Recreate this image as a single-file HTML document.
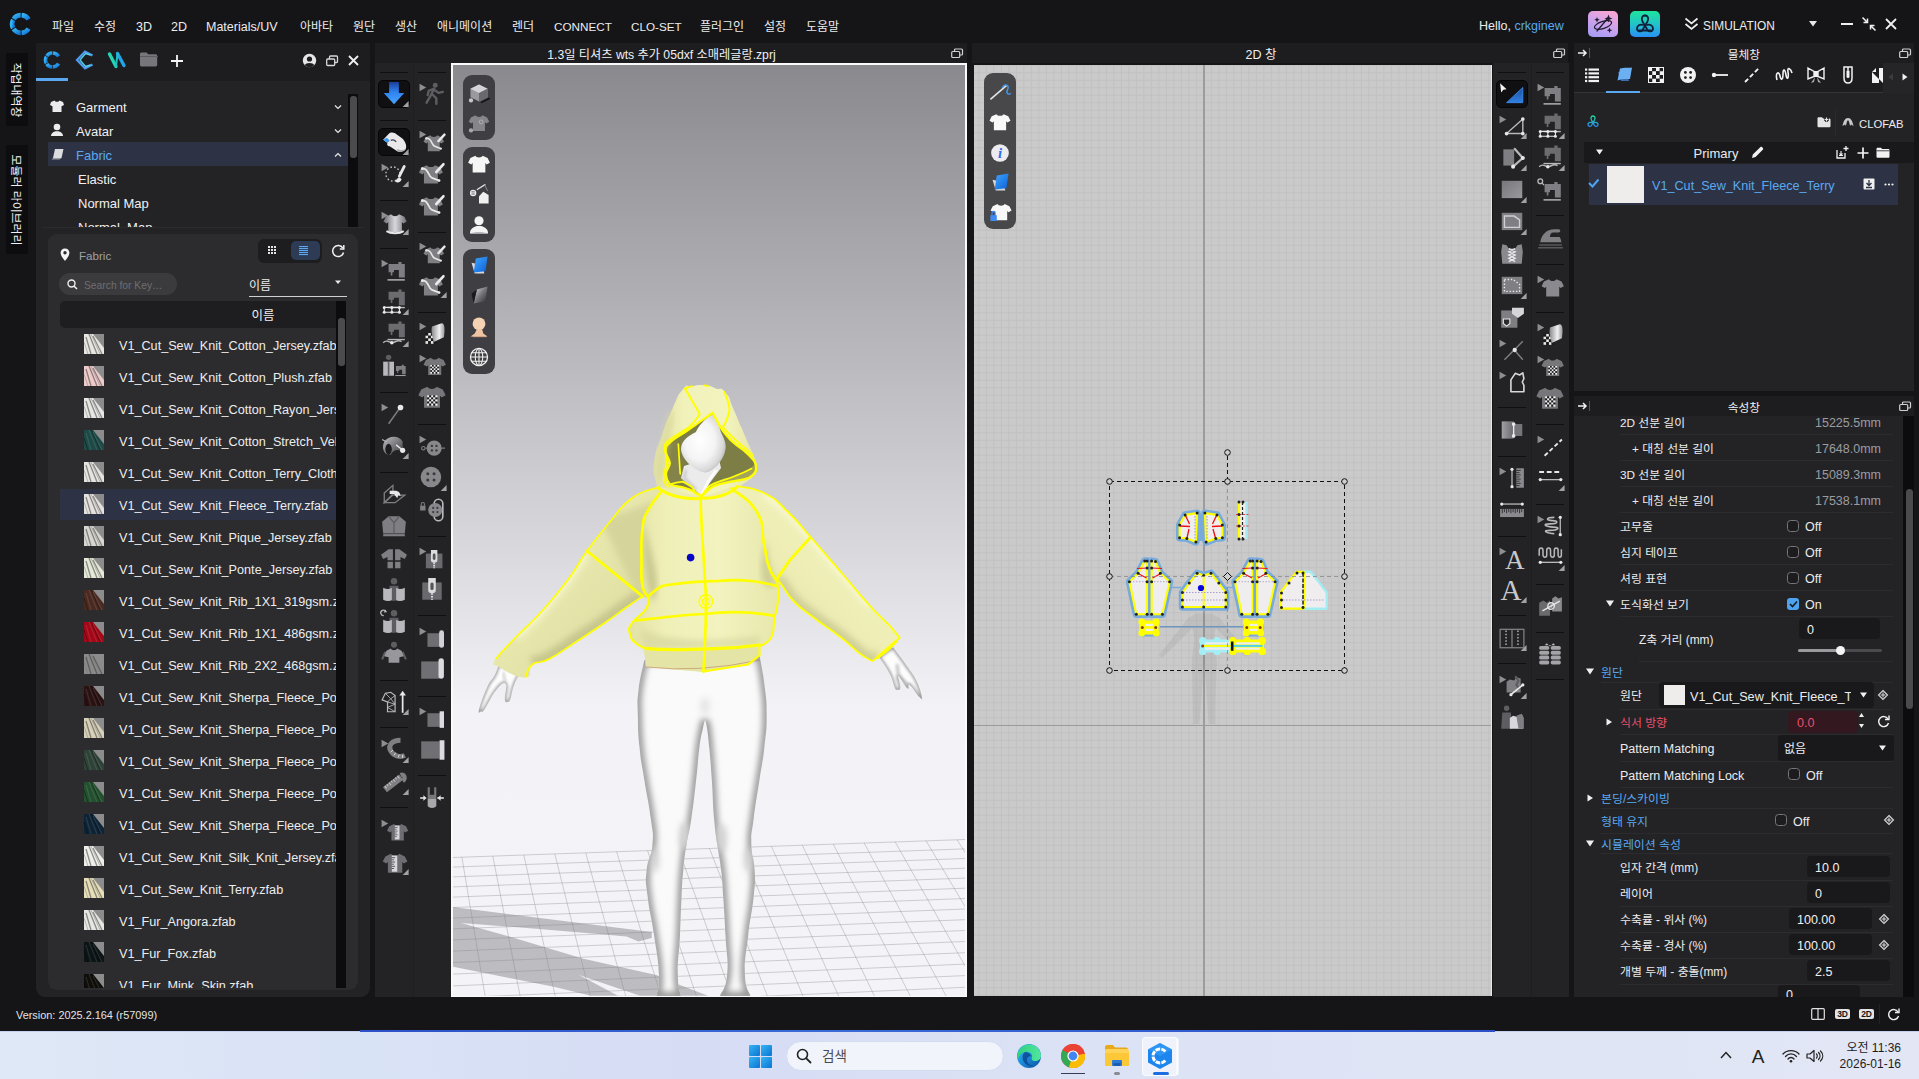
<!DOCTYPE html><html lang="ko"><head><meta charset="utf-8"><title>CLO</title><style>
*{box-sizing:border-box;margin:0;padding:0}
html,body{width:1919px;height:1079px;overflow:hidden;background:#151517}
body{position:relative;font-family:"Liberation Sans","Noto Sans CJK KR",sans-serif;font-size:12.5px;color:#e4e4e6;line-height:1}
.a{position:absolute}
.t{position:absolute;white-space:nowrap;line-height:20px;height:20px}
.k{font-size:12px}
.l{font-size:13px}
svg{position:absolute;overflow:visible}
.hl{position:absolute;height:1px;background:#111113}
</style></head><body><div class="a" style="left:0px;top:0px;width:1919px;height:43px;background:#151517;"></div><svg style="left:0px;top:0px;" width="44" height="44" viewBox="0 0 44 44"><defs><linearGradient id="lg0" x1="0" y1="0" x2="1" y2="1"><stop offset="0" stop-color="#35b4f2"/><stop offset="1" stop-color="#1577d8"/></linearGradient></defs><path d="M28.63,28.58A8.9,8.9 0 0 1 21.62,32.88" fill="none" stroke="url(#lg0)" stroke-width="4.6"/><path d="M20.69,32.89A8.9,8.9 0 0 1 13.62,28.98" fill="none" stroke="url(#lg0)" stroke-width="4.6"/><path d="M13.14,28.18A8.9,8.9 0 0 1 13.14,19.82" fill="none" stroke="url(#lg0)" stroke-width="4.6"/><path d="M13.62,19.02A8.9,8.9 0 0 1 20.69,15.11" fill="none" stroke="url(#lg0)" stroke-width="4.6"/><path d="M21.62,15.12A8.9,8.9 0 0 1 28.63,19.42" fill="none" stroke="url(#lg0)" stroke-width="4.6"/></svg><div class="t k" style="left:52px;top:17px;color:#ececee">파일</div><div class="t k" style="left:94px;top:17px;color:#ececee">수정</div><div class="t " style="left:136px;top:17px;color:#ececee">3D</div><div class="t " style="left:171px;top:17px;color:#ececee">2D</div><div class="t " style="left:206px;top:17px;color:#ececee">Materials/UV</div><div class="t k" style="left:300px;top:17px;color:#ececee">아바타</div><div class="t k" style="left:353px;top:17px;color:#ececee">원단</div><div class="t k" style="left:395px;top:17px;color:#ececee">생산</div><div class="t k" style="left:437px;top:17px;color:#ececee">애니메이션</div><div class="t k" style="left:512px;top:17px;color:#ececee">렌더</div><div class="t " style="left:554px;top:17px;color:#ececee;font-size:11.7px">CONNECT</div><div class="t " style="left:631px;top:17px;color:#ececee;font-size:11.7px">CLO-SET</div><div class="t k" style="left:700px;top:17px;color:#ececee">플러그인</div><div class="t k" style="left:764px;top:17px;color:#ececee">설정</div><div class="t k" style="left:806px;top:17px;color:#ececee">도움말</div><div class="t " style="left:1479px;top:16px;color:#ececee;font-size:12.5px">Hello, <span style="color:#5aa9f0">crkginew</span></div><div class="a" style="left:1588px;top:11px;width:30px;height:26px;background:linear-gradient(200deg,#f7a6d4 10%,#c9a2ee 55%,#9f9bf3 100%);border-radius:5px"></div><svg style="left:1588px;top:11px;" width="30" height="26" viewBox="0 0 30 26"><g fill="none" stroke="#1b1b2b" stroke-width="1.2" stroke-linecap="round"><path d="M9,20L20,7"/><ellipse cx="15" cy="14" rx="9" ry="3.5" transform="rotate(-18 15 14)"/></g><g fill="#1b1b2b"><path d="M20.5,3.5l1.1,2.9l2.9,1.1l-2.9,1.1l-1.1,2.9l-1.1,-2.9l-2.9,-1.1l2.9,-1.1z"/><path d="M9,6l.8,2l2,.8l-2,.8l-.8,2l-.8,-2l-2,-.8l2,-.8z"/><path d="M21.5,16.5l.8,2l2,.8l-2,.8l-.8,2l-.8,-2l-2,-.8l2,-.8z"/></g></svg><div class="a" style="left:1630px;top:11px;width:30px;height:26px;background:linear-gradient(180deg,#1fe39c 0%,#22c4c8 50%,#2a8ff5 100%);border-radius:5px"></div><svg style="left:1630px;top:11px;" width="30" height="26" viewBox="0 0 30 26"><g fill="none" stroke="#10203a" stroke-width="1.8" stroke-linecap="round" stroke-linejoin="round"><path d="M15,4.5c-3,0-4,3-2.5,6l5,8.5c1.5,2.5,5.5,1.500,5.500,-1.500c0,-3,-3,-4.500,-6,-3.500"/><path d="M15,4.5c3,0,4,3,2.500,6l-5,8.500c-1.500,2.500,-5.500,1.500,-5.500,-1.500c0,-3,3,-4.500,6,-3.500"/><path d="M9,19.500h12"/></g></svg><svg style="left:1684px;top:16px;" width="16" height="16" viewBox="0 0 16 16"><path d="M1.5,2.500l6,5l6,-5M1.500,8l6,5l6,-5" fill="none" stroke="#f0f0f0" stroke-width="1.700"/></svg><div class="t " style="left:1703px;top:16px;color:#ececee;font-size:11.9px">SIMULATION</div><svg style="left:1808px;top:20px;" width="10" height="8" viewBox="0 0 10 8"><path d="M1,1h8l-4,5.500z" fill="#e8e8e8"/></svg><div class="a" style="left:1841px;top:23px;width:12px;height:2px;background:#f0f0f0;"></div><svg style="left:1861px;top:16px;" width="16" height="16" viewBox="0 0 16 16"><g fill="none" stroke="#f0f0f0" stroke-width="1.500"><path d="M1.500,1.500l5,5M6.500,2.500v4h-4M14.500,14.500l-5,-5M9.500,13.500v-4h4"/></g></svg><svg style="left:1885px;top:18px;" width="12" height="12" viewBox="0 0 12 12"><path d="M1,1l10,10M11,1l-10,10" stroke="#f0f0f0" stroke-width="1.800" fill="none"/></svg>
<div class="a" style="left:6px;top:53px;width:22px;height:73px;background:#0d0d0f;"></div><div class="a" style="left:6px;top:145px;width:22px;height:109px;background:#0d0d0f;"></div><div class="t k" style="left:-84.5px;top:80px;width:200px;text-align:center;transform:rotate(90deg);color:#f2f2f2;font-size:11.9px">작업내역창</div><div class="t k" style="left:-84.5px;top:190px;width:200px;text-align:center;transform:rotate(90deg);color:#f2f2f2;font-size:11.9px">모듈러 라이브러리</div>
<div class="a" style="left:36px;top:43px;width:334px;height:954px;background:#232326;border-radius:0 0 9px 9px"></div><div class="a" style="left:36px;top:43px;width:334px;height:38px;background:#1d1d20;"></div><div class="a" style="left:36px;top:78px;width:32px;height:3px;background:#5aa9f0;"></div><svg style="left:36px;top:43px;" width="40" height="36" viewBox="0 0 40 36"><defs><linearGradient id="lg1" x1="0" y1="0" x2="1" y2="1"><stop offset="0" stop-color="#35b4f2"/><stop offset="1" stop-color="#1577d8"/></linearGradient></defs><path d="M22.60,20.61A7,7 0 0 1 17.09,23.98" fill="none" stroke="url(#lg1)" stroke-width="3.6"/><path d="M16.36,24.00A7,7 0 0 1 10.80,20.91" fill="none" stroke="url(#lg1)" stroke-width="3.6"/><path d="M10.42,20.29A7,7 0 0 1 10.42,13.71" fill="none" stroke="url(#lg1)" stroke-width="3.6"/><path d="M10.80,13.09A7,7 0 0 1 16.36,10.00" fill="none" stroke="url(#lg1)" stroke-width="3.6"/><path d="M17.09,10.02A7,7 0 0 1 22.60,13.39" fill="none" stroke="url(#lg1)" stroke-width="3.6"/></svg><svg style="left:75px;top:50px;" width="20" height="20" viewBox="0 0 20 20"><g fill="none" stroke-linejoin="miter"><path d="M17.500,5.500L10,1.500L2,10L10,18.500L17.500,14.500" stroke="#4e9cf0" stroke-width="2.200"/><path d="M15.500,5L10.500,3.500L5,10L10.500,16.500L15.500,15" stroke="#56d4e6" stroke-width="1.400"/></g></svg><svg style="left:106px;top:50px;" width="22" height="20" viewBox="0 0 22 20"><g fill="none" stroke-linecap="round" stroke-width="3.400"><path d="M3.500,4L10,16.500" stroke="#25d6b4"/><path d="M11.500,3.500L18,15.500" stroke="#1fa6e8"/><path d="M10,16.500L11.500,3.500" stroke="#20c0c8" stroke-width="2"/></g></svg><svg style="left:139px;top:51px;" width="20" height="17" viewBox="0 0 20 17"><path d="M1,3c0,-1,.6,-1.600,1.600,-1.600h5l1.600,1.800h7.400c1,0,1.600,.6,1.600,1.600v9c0,1,-.6,1.600,-1.600,1.600h-14c-1,0,-1.600,-.6,-1.600,-1.600z" fill="#77777b"/><path d="M1,5.500h18" stroke="#5c5c60" stroke-width="1"/></svg><svg style="left:170px;top:54px;" width="14" height="14" viewBox="0 0 14 14"><path d="M7,1v12M1,7h12" stroke="#f4f4f4" stroke-width="1.800"/></svg><svg style="left:302px;top:53px;" width="15" height="15" viewBox="0 0 15 15"><circle cx="7.500" cy="7.500" r="6.700" fill="#e6e6e6"/><circle cx="7.500" cy="6" r="2.600" fill="#1d1d20"/><path d="M2.800,12.200c1,-3,8.400,-3,9.400,0c-2.500,2.600,-6.900,2.600,-9.400,0z" fill="#1d1d20"/></svg><svg style="left:326px;top:55px;" width="12" height="12" viewBox="0 0 12 12"><g fill="none" stroke="#d8d8d8" stroke-width="1.300"><rect x="3.500" y="1" width="8" height="6.500" rx="1"/><rect x=".7" y="4" width="8" height="6.500" rx="1" fill="#1d1d20"/></g></svg><svg style="left:348px;top:55px;" width="11" height="11" viewBox="0 0 11 11"><path d="M1,1l9,9M10,1l-9,9" stroke="#f0f0f0" stroke-width="1.800"/></svg><div class="a" style="left:48px;top:142px;width:300px;height:24px;background:#2d3345;"></div><div class="t " style="left:76px;top:98px;color:#f0f0f0;font-size:13px">Garment</div><div class="t " style="left:76px;top:122px;color:#f0f0f0;font-size:13px">Avatar</div><div class="t " style="left:76px;top:146px;color:#5aa9f0;font-size:13px">Fabric</div><div class="t " style="left:78px;top:170px;color:#f0f0f0;font-size:13px">Elastic</div><div class="t " style="left:78px;top:194px;color:#f0f0f0;font-size:13px">Normal Map</div><div class="a" style="left:48px;top:214px;width:300px;height:13px;overflow:hidden"><div class="t" style="left:30px;top:4px;color:#f0f0f0;font-size:13px">Normal_Map</div></div><svg style="left:50px;top:100px;" width="14" height="13" viewBox="0 0 14 13"><path d="M4.500,0.500L1,2L0,5l2.500,1.200V12h9V6.200L14,5L13,2L9.500,0.500C9,2.300,5,2.300,4.500,0.500z" fill="#ececec"/></svg><svg style="left:50px;top:123px;" width="14" height="14" viewBox="0 0 14 14"><circle cx="7" cy="4" r="3.300" fill="#ececec"/><path d="M1,13c0,-3,3,-4.500,4.500,-4.800h3C10,8.500,13,10,13,13z" fill="#ececec"/></svg><svg style="left:51px;top:148px;" width="13" height="13" viewBox="0 0 13 13"><path d="M4,1h8.500l-2,9h-8.500z" fill="#dcdce0"/><path d="M2,10l-1.500,1.500h8l2,-1.500z" fill="#9a9aa4"/></svg><svg style="left:334px;top:103.5px;" width="8" height="6" viewBox="0 0 8 6"><path d="M1,1.500l3,3l3,-3" fill="none" stroke="#e8e8e8" stroke-width="1.200"/></svg><svg style="left:334px;top:127.5px;" width="8" height="6" viewBox="0 0 8 6"><path d="M1,1.500l3,3l3,-3" fill="none" stroke="#e8e8e8" stroke-width="1.200"/></svg><svg style="left:334px;top:151.5px;" width="8" height="6" viewBox="0 0 8 6"><path d="M1,4.500l3,-3l3,3" fill="none" stroke="#e8e8e8" stroke-width="1.200"/></svg><div class="a" style="left:348px;top:94px;width:10px;height:133px;background:#0c0c0e;"></div><div class="a" style="left:349.5px;top:96px;width:7px;height:62px;background:#4b4b4e;border-radius:3px"></div><div class="a" style="left:42px;top:227px;width:322px;height:1px;background:#2b2b2e;"></div><div class="a" style="left:48px;top:234px;width:310px;height:756px;background:#2c2c2f;border-radius:9px"></div><svg style="left:60px;top:248px;" width="10" height="14" viewBox="0 0 10 14"><path d="M5,0.500C2.300,0.500,.6,2.500,.6,4.800C.6,8,5,13,5,13S9.400,8,9.400,4.800C9.400,2.500,7.700,.5,5,.5z" fill="#f4f4f4"/><circle cx="5" cy="4.800" r="1.700" fill="#2c2c2f"/></svg><div class="t " style="left:79px;top:246px;color:#a0a0a4;font-size:11.6px">Fabric</div><div class="a" style="left:258px;top:239px;width:64px;height:24px;background:#1d1d20;border-radius:6px"></div><div class="a" style="left:291px;top:241px;width:29px;height:19px;background:#2d3b55;border-radius:5px"></div><svg style="left:268px;top:246px;" width="8" height="8" viewBox="0 0 8 8"><rect x="0" y="0" width="2" height="2" fill="#e4e4e4"/><rect x="0" y="3" width="2" height="2" fill="#e4e4e4"/><rect x="0" y="6" width="2" height="2" fill="#e4e4e4"/><rect x="3" y="0" width="2" height="2" fill="#e4e4e4"/><rect x="3" y="3" width="2" height="2" fill="#e4e4e4"/><rect x="3" y="6" width="2" height="2" fill="#e4e4e4"/><rect x="6" y="0" width="2" height="2" fill="#e4e4e4"/><rect x="6" y="3" width="2" height="2" fill="#e4e4e4"/><rect x="6" y="6" width="2" height="2" fill="#e4e4e4"/></svg><svg style="left:299px;top:246px;" width="9" height="9" viewBox="0 0 9 9"><rect x="0" y="0" width="9" height="1.100" fill="#5aa9f0"/><rect x="0" y="2" width="9" height="1.100" fill="#5aa9f0"/><rect x="0" y="4" width="9" height="1.100" fill="#5aa9f0"/><rect x="0" y="6" width="9" height="1.100" fill="#5aa9f0"/><rect x="0" y="8" width="9" height="1.100" fill="#5aa9f0"/></svg><svg style="left:331px;top:244px;" width="14" height="14" viewBox="0 0 14 14"><path d="M11.800,4A5.500,5.500 0 1 0 12.500,8.500" fill="none" stroke="#f0f0f0" stroke-width="1.500"/><path d="M12.800,1v4h-4" fill="none" stroke="#f0f0f0" stroke-width="1.500"/></svg><div class="a" style="left:59px;top:273px;width:118px;height:22px;background:#3b3b3e;border-radius:11px"></div><svg style="left:67px;top:279px;" width="11" height="11" viewBox="0 0 11 11"><circle cx="4.500" cy="4.500" r="3.500" fill="none" stroke="#f0f0f0" stroke-width="1.400"/><path d="M7,7l3,3" stroke="#f0f0f0" stroke-width="1.500"/></svg><div class="t " style="left:84px;top:276px;color:#6e6e72;font-size:10.3px">Search for Key…</div><div class="t k" style="left:249px;top:275.5px;color:#ececee">이름</div><svg style="left:335px;top:280px;" width="6" height="5" viewBox="0 0 6 5"><path d="M0,0.500h6l-3,3.500z" fill="#e8e8e8"/></svg><div class="a" style="left:249px;top:296px;width:98px;height:1px;background:#d0d0d0;"></div><div class="a" style="left:60px;top:301px;width:276px;height:27px;background:#1e1e21;border-radius:5px 0 0 5px"></div><div class="t k" style="left:113px;width:300px;text-align:center;top:306px;color:#f0f0f0;font-size:12.5px">이름</div><div class="a" style="left:336px;top:301px;width:10px;height:687px;background:#0c0c0e;"></div><div class="a" style="left:337.5px;top:318px;width:7px;height:48px;background:#4b4b4e;border-radius:3px"></div><div class="a" style="left:60px;top:489px;width:276px;height:31px;background:#2d3345;"></div><div class="a" style="left:60px;top:328px;width:276px;height:660px;overflow:hidden"><svg style="left:24px;top:6px;" width="20" height="20" viewBox="0 0 20 20"><rect width="20" height="20" fill="#8c8c8c"/><path d="M0,0H9L20,14V20H0Z" fill="#e8e6e0"/><path d="M5,0L13,20M9,2L18,20M2,3L7,20" stroke="rgba(60,60,60,.55)" stroke-width="1.300" fill="none"/><path d="M7,0L16,20M0,8L4,20" stroke="rgba(120,120,120,.45)" stroke-width="1" fill="none"/></svg><div class="t" style="left:59px;top:8px;color:#ececee;font-size:12.650px">V1_Cut_Sew_Knit_Cotton_Jersey.zfab</div><svg style="left:24px;top:38px;" width="20" height="20" viewBox="0 0 20 20"><rect width="20" height="20" fill="#8c8c8c"/><path d="M0,0H9L20,14V20H0Z" fill="#eecaca"/><path d="M5,0L13,20M9,2L18,20M2,3L7,20" stroke="rgba(60,60,60,.55)" stroke-width="1.300" fill="none"/><path d="M7,0L16,20M0,8L4,20" stroke="rgba(120,120,120,.45)" stroke-width="1" fill="none"/></svg><div class="t" style="left:59px;top:40px;color:#ececee;font-size:12.650px">V1_Cut_Sew_Knit_Cotton_Plush.zfab</div><svg style="left:24px;top:70px;" width="20" height="20" viewBox="0 0 20 20"><rect width="20" height="20" fill="#8c8c8c"/><path d="M0,0H9L20,14V20H0Z" fill="#e6e6e4"/><path d="M5,0L13,20M9,2L18,20M2,3L7,20" stroke="rgba(60,60,60,.55)" stroke-width="1.300" fill="none"/><path d="M7,0L16,20M0,8L4,20" stroke="rgba(120,120,120,.45)" stroke-width="1" fill="none"/></svg><div class="t" style="left:59px;top:72px;color:#ececee;font-size:12.650px">V1_Cut_Sew_Knit_Cotton_Rayon_Jersey.zfab</div><svg style="left:24px;top:102px;" width="20" height="20" viewBox="0 0 20 20"><rect width="20" height="20" fill="#8c8c8c"/><path d="M0,0H9L20,14V20H0Z" fill="#1d4a46"/><path d="M5,0L13,20M9,2L18,20M2,3L7,20" stroke="rgba(255,255,255,.10)" stroke-width="1.300" fill="none"/><path d="M7,0L16,20M0,8L4,20" stroke="rgba(0,0,0,.35)" stroke-width="1" fill="none"/></svg><div class="t" style="left:59px;top:104px;color:#ececee;font-size:12.650px">V1_Cut_Sew_Knit_Cotton_Stretch_Velour.zfab</div><svg style="left:24px;top:134px;" width="20" height="20" viewBox="0 0 20 20"><rect width="20" height="20" fill="#8c8c8c"/><path d="M0,0H9L20,14V20H0Z" fill="#e6e4e0"/><path d="M5,0L13,20M9,2L18,20M2,3L7,20" stroke="rgba(60,60,60,.55)" stroke-width="1.300" fill="none"/><path d="M7,0L16,20M0,8L4,20" stroke="rgba(120,120,120,.45)" stroke-width="1" fill="none"/></svg><div class="t" style="left:59px;top:136px;color:#ececee;font-size:12.650px">V1_Cut_Sew_Knit_Cotton_Terry_Cloth.zfab</div><svg style="left:24px;top:166px;" width="20" height="20" viewBox="0 0 20 20"><rect width="20" height="20" fill="#8c8c8c"/><path d="M0,0H9L20,14V20H0Z" fill="#e4e2de"/><path d="M5,0L13,20M9,2L18,20M2,3L7,20" stroke="rgba(60,60,60,.55)" stroke-width="1.300" fill="none"/><path d="M7,0L16,20M0,8L4,20" stroke="rgba(120,120,120,.45)" stroke-width="1" fill="none"/></svg><div class="t" style="left:59px;top:168px;color:#ececee;font-size:12.650px">V1_Cut_Sew_Knit_Fleece_Terry.zfab</div><svg style="left:24px;top:198px;" width="20" height="20" viewBox="0 0 20 20"><rect width="20" height="20" fill="#8c8c8c"/><path d="M0,0H9L20,14V20H0Z" fill="#d8d6d0"/><path d="M5,0L13,20M9,2L18,20M2,3L7,20" stroke="rgba(60,60,60,.55)" stroke-width="1.300" fill="none"/><path d="M7,0L16,20M0,8L4,20" stroke="rgba(120,120,120,.45)" stroke-width="1" fill="none"/></svg><div class="t" style="left:59px;top:200px;color:#ececee;font-size:12.650px">V1_Cut_Sew_Knit_Pique_Jersey.zfab</div><svg style="left:24px;top:230px;" width="20" height="20" viewBox="0 0 20 20"><rect width="20" height="20" fill="#8c8c8c"/><path d="M0,0H9L20,14V20H0Z" fill="#e4e8d6"/><path d="M5,0L13,20M9,2L18,20M2,3L7,20" stroke="rgba(60,60,60,.55)" stroke-width="1.300" fill="none"/><path d="M7,0L16,20M0,8L4,20" stroke="rgba(120,120,120,.45)" stroke-width="1" fill="none"/></svg><div class="t" style="left:59px;top:232px;color:#ececee;font-size:12.650px">V1_Cut_Sew_Knit_Ponte_Jersey.zfab</div><svg style="left:24px;top:262px;" width="20" height="20" viewBox="0 0 20 20"><rect width="20" height="20" fill="#8c8c8c"/><path d="M0,0H9L20,14V20H0Z" fill="#4a2a20"/><path d="M5,0L13,20M9,2L18,20M2,3L7,20" stroke="rgba(255,255,255,.10)" stroke-width="1.300" fill="none"/><path d="M7,0L16,20M0,8L4,20" stroke="rgba(0,0,0,.35)" stroke-width="1" fill="none"/></svg><div class="t" style="left:59px;top:264px;color:#ececee;font-size:12.650px">V1_Cut_Sew_Knit_Rib_1X1_319gsm.zfab</div><svg style="left:24px;top:294px;" width="20" height="20" viewBox="0 0 20 20"><rect width="20" height="20" fill="#8c8c8c"/><path d="M0,0H9L20,14V20H0Z" fill="#a40818"/><path d="M5,0L13,20M9,2L18,20M2,3L7,20" stroke="rgba(255,255,255,.10)" stroke-width="1.300" fill="none"/><path d="M7,0L16,20M0,8L4,20" stroke="rgba(0,0,0,.35)" stroke-width="1" fill="none"/></svg><div class="t" style="left:59px;top:296px;color:#ececee;font-size:12.650px">V1_Cut_Sew_Knit_Rib_1X1_486gsm.zfab</div><svg style="left:24px;top:326px;" width="20" height="20" viewBox="0 0 20 20"><rect width="20" height="20" fill="#8c8c8c"/><path d="M0,0H9L20,14V20H0Z" fill="#8a8a8a"/><path d="M5,0L13,20M9,2L18,20M2,3L7,20" stroke="rgba(60,60,60,.55)" stroke-width="1.300" fill="none"/><path d="M7,0L16,20M0,8L4,20" stroke="rgba(120,120,120,.45)" stroke-width="1" fill="none"/></svg><div class="t" style="left:59px;top:328px;color:#ececee;font-size:12.650px">V1_Cut_Sew_Knit_Rib_2X2_468gsm.zfab</div><svg style="left:24px;top:358px;" width="20" height="20" viewBox="0 0 20 20"><rect width="20" height="20" fill="#8c8c8c"/><path d="M0,0H9L20,14V20H0Z" fill="#2a1212"/><path d="M5,0L13,20M9,2L18,20M2,3L7,20" stroke="rgba(255,255,255,.10)" stroke-width="1.300" fill="none"/><path d="M7,0L16,20M0,8L4,20" stroke="rgba(0,0,0,.35)" stroke-width="1" fill="none"/></svg><div class="t" style="left:59px;top:360px;color:#ececee;font-size:12.650px">V1_Cut_Sew_Knit_Sherpa_Fleece_Polyester_A.zfab</div><svg style="left:24px;top:390px;" width="20" height="20" viewBox="0 0 20 20"><rect width="20" height="20" fill="#8c8c8c"/><path d="M0,0H9L20,14V20H0Z" fill="#d6d0b8"/><path d="M5,0L13,20M9,2L18,20M2,3L7,20" stroke="rgba(60,60,60,.55)" stroke-width="1.300" fill="none"/><path d="M7,0L16,20M0,8L4,20" stroke="rgba(120,120,120,.45)" stroke-width="1" fill="none"/></svg><div class="t" style="left:59px;top:392px;color:#ececee;font-size:12.650px">V1_Cut_Sew_Knit_Sherpa_Fleece_Polyester_B.zfab</div><svg style="left:24px;top:422px;" width="20" height="20" viewBox="0 0 20 20"><rect width="20" height="20" fill="#8c8c8c"/><path d="M0,0H9L20,14V20H0Z" fill="#2e4238"/><path d="M5,0L13,20M9,2L18,20M2,3L7,20" stroke="rgba(255,255,255,.10)" stroke-width="1.300" fill="none"/><path d="M7,0L16,20M0,8L4,20" stroke="rgba(0,0,0,.35)" stroke-width="1" fill="none"/></svg><div class="t" style="left:59px;top:424px;color:#ececee;font-size:12.650px">V1_Cut_Sew_Knit_Sherpa_Fleece_Polyester_C.zfab</div><svg style="left:24px;top:454px;" width="20" height="20" viewBox="0 0 20 20"><rect width="20" height="20" fill="#8c8c8c"/><path d="M0,0H9L20,14V20H0Z" fill="#23502e"/><path d="M5,0L13,20M9,2L18,20M2,3L7,20" stroke="rgba(255,255,255,.10)" stroke-width="1.300" fill="none"/><path d="M7,0L16,20M0,8L4,20" stroke="rgba(0,0,0,.35)" stroke-width="1" fill="none"/></svg><div class="t" style="left:59px;top:456px;color:#ececee;font-size:12.650px">V1_Cut_Sew_Knit_Sherpa_Fleece_Polyester_D.zfab</div><svg style="left:24px;top:486px;" width="20" height="20" viewBox="0 0 20 20"><rect width="20" height="20" fill="#8c8c8c"/><path d="M0,0H9L20,14V20H0Z" fill="#0e2436"/><path d="M5,0L13,20M9,2L18,20M2,3L7,20" stroke="rgba(255,255,255,.10)" stroke-width="1.300" fill="none"/><path d="M7,0L16,20M0,8L4,20" stroke="rgba(0,0,0,.35)" stroke-width="1" fill="none"/></svg><div class="t" style="left:59px;top:488px;color:#ececee;font-size:12.650px">V1_Cut_Sew_Knit_Sherpa_Fleece_Polyester_E.zfab</div><svg style="left:24px;top:518px;" width="20" height="20" viewBox="0 0 20 20"><rect width="20" height="20" fill="#8c8c8c"/><path d="M0,0H9L20,14V20H0Z" fill="#eeeeea"/><path d="M5,0L13,20M9,2L18,20M2,3L7,20" stroke="rgba(60,60,60,.55)" stroke-width="1.300" fill="none"/><path d="M7,0L16,20M0,8L4,20" stroke="rgba(120,120,120,.45)" stroke-width="1" fill="none"/></svg><div class="t" style="left:59px;top:520px;color:#ececee;font-size:12.650px">V1_Cut_Sew_Knit_Silk_Knit_Jersey.zfab</div><svg style="left:24px;top:550px;" width="20" height="20" viewBox="0 0 20 20"><rect width="20" height="20" fill="#8c8c8c"/><path d="M0,0H9L20,14V20H0Z" fill="#e6deb8"/><path d="M5,0L13,20M9,2L18,20M2,3L7,20" stroke="rgba(60,60,60,.55)" stroke-width="1.300" fill="none"/><path d="M7,0L16,20M0,8L4,20" stroke="rgba(120,120,120,.45)" stroke-width="1" fill="none"/></svg><div class="t" style="left:59px;top:552px;color:#ececee;font-size:12.650px">V1_Cut_Sew_Knit_Terry.zfab</div><svg style="left:24px;top:582px;" width="20" height="20" viewBox="0 0 20 20"><rect width="20" height="20" fill="#8c8c8c"/><path d="M0,0H9L20,14V20H0Z" fill="#e6e6e2"/><path d="M5,0L13,20M9,2L18,20M2,3L7,20" stroke="rgba(60,60,60,.55)" stroke-width="1.300" fill="none"/><path d="M7,0L16,20M0,8L4,20" stroke="rgba(120,120,120,.45)" stroke-width="1" fill="none"/></svg><div class="t" style="left:59px;top:584px;color:#ececee;font-size:12.650px">V1_Fur_Angora.zfab</div><svg style="left:24px;top:614px;" width="20" height="20" viewBox="0 0 20 20"><rect width="20" height="20" fill="#8c8c8c"/><path d="M0,0H9L20,14V20H0Z" fill="#0c1416"/><path d="M5,0L13,20M9,2L18,20M2,3L7,20" stroke="rgba(255,255,255,.10)" stroke-width="1.300" fill="none"/><path d="M7,0L16,20M0,8L4,20" stroke="rgba(0,0,0,.35)" stroke-width="1" fill="none"/></svg><div class="t" style="left:59px;top:616px;color:#ececee;font-size:12.650px">V1_Fur_Fox.zfab</div><svg style="left:24px;top:646px;" width="20" height="20" viewBox="0 0 20 20"><rect width="20" height="20" fill="#8c8c8c"/><path d="M0,0H9L20,14V20H0Z" fill="#100e0a"/><path d="M5,0L13,20M9,2L18,20M2,3L7,20" stroke="rgba(255,255,255,.10)" stroke-width="1.300" fill="none"/><path d="M7,0L16,20M0,8L4,20" stroke="rgba(0,0,0,.35)" stroke-width="1" fill="none"/></svg><div class="t" style="left:59px;top:648px;color:#ececee;font-size:12.650px">V1_Fur_Mink_Skin.zfab</div></div>
<div class="a" style="left:375px;top:43px;width:592px;height:20px;background:#1d1d20;"></div><div class="t " style="left:511.5px;width:300px;text-align:center;top:44.5px;color:#f0f0f0;font-size:12.2px">1.3일 티셔츠 wts 추가 05dxf 소매레글랑.zprj</div><svg style="left:951px;top:48px;" width="12" height="11" viewBox="0 0 12 11"><g fill="none" stroke="#d0d0d0" stroke-width="1.200"><rect x="3.500" y="1" width="8" height="6" rx="1"/><rect x=".7" y="3.500" width="8" height="6" rx="1" fill="#1d1d20"/></g></svg><div class="a" style="left:451px;top:63px;width:516px;height:934px;background:#fafafa;"></div><svg style="left:0;top:0" width="1919" height="1079" viewBox="0 0 1919 1079"><clipPath id="vp3d"><rect x="453" y="65" width="512" height="931"/></clipPath><g clip-path="url(#vp3d)"><defs>
<linearGradient id="bg3d" x1="0" y1="0" x2="0" y2="1"><stop offset="0" stop-color="#8a8a8e"/><stop offset=".69" stop-color="#f3f3f7"/><stop offset="1" stop-color="#f4f4f8"/></linearGradient>
<linearGradient id="legL" gradientUnits="userSpaceOnUse" x1="636" y1="0" x2="668" y2="0"><stop offset="0" stop-color="#c4c4c4"/><stop offset=".45" stop-color="#ededed"/><stop offset="1" stop-color="#fbfbfb"/></linearGradient><linearGradient id="legL2" gradientUnits="userSpaceOnUse" x1="668" y1="0" x2="704" y2="0"><stop offset="0" stop-color="#fbfbfb"/><stop offset=".5" stop-color="#eeeeee"/><stop offset="1" stop-color="#d2d2d2"/></linearGradient>
<linearGradient id="legR" gradientUnits="userSpaceOnUse" x1="705" y1="0" x2="737" y2="0"><stop offset="0" stop-color="#d2d2d2"/><stop offset=".5" stop-color="#f0f0f0"/><stop offset="1" stop-color="#fcfcfc"/></linearGradient><linearGradient id="legR2" gradientUnits="userSpaceOnUse" x1="737" y1="0" x2="767" y2="0"><stop offset="0" stop-color="#fcfcfc"/><stop offset=".55" stop-color="#ebebeb"/><stop offset="1" stop-color="#bcbcbc"/></linearGradient>
<linearGradient id="hoodG" x1="0" y1="0" x2="1" y2="0"><stop offset="0" stop-color="#dedea2"/><stop offset=".3" stop-color="#f1f1ba"/><stop offset=".7" stop-color="#f3f3be"/><stop offset="1" stop-color="#e4e4a8"/></linearGradient>
<linearGradient id="bodyG" x1="0" y1="0" x2="1" y2="0"><stop offset="0" stop-color="#e2e2a6"/><stop offset=".25" stop-color="#efefb8"/><stop offset=".6" stop-color="#f3f3c0"/><stop offset="1" stop-color="#e6e6ac"/></linearGradient>
<linearGradient id="slvL" x1="0" y1="0" x2="1" y2="1"><stop offset="0" stop-color="#f0f0ba"/><stop offset=".5" stop-color="#e6e6ac"/><stop offset="1" stop-color="#d8d89a"/></linearGradient>
<linearGradient id="slvR" x1="1" y1="0" x2="0" y2="1"><stop offset="0" stop-color="#f4f4c2"/><stop offset=".5" stop-color="#eeeeb6"/><stop offset="1" stop-color="#dedea4"/></linearGradient>
<radialGradient id="faceG" cx=".42" cy=".45" r=".62"><stop offset="0" stop-color="#ffffff"/><stop offset=".55" stop-color="#f4f4f4"/><stop offset=".85" stop-color="#d8d8d8"/><stop offset="1" stop-color="#b4b4b4"/></radialGradient>
</defs><rect x="453" y="65" width="512" height="931" fill="url(#bg3d)"/><g fill="#bdbdc1"><path d="M453,907L651.700,932L651.700,938L638.400,941.600L626.500,936.400L592.400,933.400L539,929L461,923L509.300,936.400L583.500,958.700L656.200,975L680,985L708,995.700H590.900L553.800,986.800L509.300,978L453,966.800Z"/></g><path d="M579,975L640,995.700L618,995.700Z" fill="#f3f3f7"/><path d="M276.2,863.7L276.2,996M307.1,862.6L310.9,996M338.1,861.5L345.6,996M369.0,860.5L380.3,996M400.0,859.4L415.2,996M430.9,858.3L450.1,996M461.9,857.2L485.1,996M492.8,856.1L520.1,996M523.8,855.0L555.2,996M554.8,853.9L590.4,996M585.7,852.8L625.7,996M616.6,851.7L661.0,996M647.6,850.7L696.4,996M678.5,849.6L731.8,996M709.5,848.5L767.4,996M740.5,847.4L803.0,996M771.4,846.3L838.6,996M802.3,845.2L874.4,996M833.3,844.1L910.2,996M864.2,843.0L946.1,996M895.2,841.9L982.0,996M926.1,840.8L1018.0,996M957.1,839.8L1054.1,996M453,857.5L965,839.5M453,867.1L965,848.9M453,876.9L965,858.5M453,886.9L965,868.2M453,897.1L965,878.1M453,907.5L965,888.2M453,918.1L965,898.5M453,928.9L965,909.0M453,939.9L965,919.7M453,951.1L965,930.5M453,962.5L965,941.5M453,974.1L965,952.7M453,985.9L965,964.1M453,997.9L965,975.6M453,1010.1L965,987.3M453,1022.5L965,999.2" stroke="#848488" stroke-opacity=".36" stroke-width="1" fill="none"/><clipPath id="legclip"><path d="M644.3,660.0C642.8,668.0 640.2,675.4 638.5,690.0C636.8,704.6 637.5,699.6 637.8,714.9C638.1,730.2 637.8,730.0 639.5,747.3C641.2,764.6 641.3,760.8 644.3,779.8C647.3,798.8 648.6,801.4 650.8,818.7C653.0,836.0 653.5,830.9 652.4,844.7C651.3,858.5 647.9,856.8 646.6,870.6C645.3,884.4 645.6,879.3 647.6,896.6C649.6,913.9 651.1,914.7 654.1,935.5C657.1,956.3 658.3,958.4 658.9,974.5C659.5,990.6 657.1,990.3 656.5,996.0L681.0,996.0C680.1,990.3 678.1,990.6 677.8,974.5C677.5,958.4 679.0,956.3 680.0,935.5C681.0,914.7 680.7,913.9 681.6,896.6C682.5,879.3 682.0,884.4 683.3,870.6C684.6,856.8 684.3,858.5 686.5,844.7C688.7,830.9 688.8,836.0 691.4,818.7C694.0,801.4 694.0,798.8 696.2,779.8C698.4,760.8 697.7,761.1 699.5,747.3C701.3,733.5 701.5,735.3 703.0,728.0C704.5,720.7 704.5,722.0 705.0,719.8L705.0,719.8C705.5,722.0 705.9,720.7 707.0,728.0C708.1,735.3 707.9,733.5 709.2,747.3C710.5,761.1 710.5,760.8 711.8,779.8C713.1,798.8 712.6,801.4 714.1,818.7C715.6,836.0 715.4,830.9 717.3,844.7C719.2,858.5 719.6,856.8 721.2,870.6C722.8,884.4 722.1,879.3 723.2,896.6C724.3,913.9 724.5,914.7 725.5,935.5C726.5,956.3 728.6,958.4 727.1,974.5C725.6,990.6 721.9,990.3 720.0,996.0L750.5,996.0C749.0,990.3 745.5,990.6 744.9,974.5C744.3,958.4 745.9,956.3 748.2,935.5C750.5,914.7 752.0,913.9 753.7,896.6C755.4,879.3 755.3,884.4 754.7,870.6C754.1,856.8 751.7,858.5 751.4,844.7C751.1,830.9 751.5,836.0 753.7,818.7C755.9,801.4 756.6,798.8 759.5,779.8C762.4,760.8 762.5,764.6 764.4,747.3C766.3,730.0 766.7,731.5 766.7,714.9C766.7,698.3 766.4,701.0 764.5,685.0C762.6,669.0 760.8,663.0 759.5,655.0Z"/></clipPath><filter id="bl3" x="-20%" y="-20%" width="140%" height="140%"><feGaussianBlur stdDeviation="3.2"/></filter><filter id="bl2" x="-20%" y="-20%" width="140%" height="140%"><feGaussianBlur stdDeviation="1.600"/></filter><g clip-path="url(#legclip)"><rect x="630" y="650" width="140" height="350" fill="#fafafa"/><path d="M644.3,660.0C642.8,668.0 640.2,675.4 638.5,690.0C636.8,704.6 637.5,699.6 637.8,714.9C638.1,730.2 637.8,730.0 639.5,747.3C641.2,764.6 641.3,760.8 644.3,779.8C647.3,798.8 648.6,801.4 650.8,818.7C653.0,836.0 653.5,830.9 652.4,844.7C651.3,858.5 647.9,856.8 646.6,870.6C645.3,884.4 645.6,879.3 647.6,896.6C649.6,913.9 651.1,914.7 654.1,935.5C657.1,956.3 658.3,958.4 658.9,974.5C659.5,990.6 657.1,990.3 656.5,996.0L681.0,996.0C680.1,990.3 678.1,990.6 677.8,974.5C677.5,958.4 679.0,956.3 680.0,935.5C681.0,914.7 680.7,913.9 681.6,896.6C682.5,879.3 682.0,884.4 683.3,870.6C684.6,856.8 684.3,858.5 686.5,844.7C688.7,830.9 688.8,836.0 691.4,818.7C694.0,801.4 694.0,798.8 696.2,779.8C698.4,760.8 697.7,761.1 699.5,747.3C701.3,733.5 701.5,735.3 703.0,728.0C704.5,720.7 704.5,722.0 705.0,719.8L705.0,719.8C705.5,722.0 705.9,720.7 707.0,728.0C708.1,735.3 707.9,733.5 709.2,747.3C710.5,761.1 710.5,760.8 711.8,779.8C713.1,798.8 712.6,801.4 714.1,818.7C715.6,836.0 715.4,830.9 717.3,844.7C719.2,858.5 719.6,856.8 721.2,870.6C722.8,884.4 722.1,879.3 723.2,896.6C724.3,913.9 724.5,914.7 725.5,935.5C726.5,956.3 728.6,958.4 727.1,974.5C725.6,990.6 721.9,990.3 720.0,996.0L750.5,996.0C749.0,990.3 745.5,990.6 744.9,974.5C744.3,958.4 745.9,956.3 748.2,935.5C750.5,914.7 752.0,913.9 753.7,896.6C755.4,879.3 755.3,884.4 754.7,870.6C754.1,856.8 751.7,858.5 751.4,844.7C751.1,830.9 751.5,836.0 753.7,818.7C755.9,801.4 756.6,798.8 759.5,779.8C762.4,760.8 762.5,764.6 764.4,747.3C766.3,730.0 766.7,731.5 766.7,714.9C766.7,698.3 766.4,701.0 764.5,685.0C762.6,669.0 760.8,663.0 759.5,655.0Z" fill="none" stroke="#969696" stroke-width="8" filter="url(#bl3)"/><g filter="url(#bl3)" fill="#d4d4d4"><ellipse cx="684" cy="836" rx="5" ry="14"/><ellipse cx="722" cy="838" rx="5" ry="14"/><ellipse cx="655" cy="860" rx="4" ry="12"/><ellipse cx="748" cy="860" rx="4" ry="12"/><ellipse cx="705" cy="706" rx="5" ry="9" fill="#e6e6e6"/></g></g><clipPath id="hlc"><path d="M499.0,664.0C497.9,666.7 497.3,670.1 494.5,675.6C491.7,681.1 490.6,679.4 487.0,687.4C483.4,695.4 480.3,704.1 478.9,709.7C477.5,715.3 479.7,711.7 481.1,711.5C482.5,711.3 481.3,713.8 484.8,708.9C488.3,704.0 491.0,696.3 495.9,690.4C500.8,684.5 503.5,681.6 505.6,683.7C507.7,685.8 504.4,695.1 504.8,699.3C505.2,703.5 505.8,701.9 507.1,701.9C508.4,701.9 508.9,703.0 510.4,699.3C511.9,695.6 511.5,692.1 513.7,686.0C515.9,679.9 518.5,676.0 520.0,673.0Z"/></clipPath><clipPath id="hrc"><path d="M879.0,657.0C881.5,660.9 886.0,666.5 889.7,673.7C893.4,680.9 893.1,684.1 894.8,687.8C896.5,691.5 895.8,689.7 897.1,689.7C898.4,689.7 900.1,691.0 900.4,687.8C900.7,684.6 896.9,675.8 898.5,676.0C900.1,676.2 904.8,686.5 907.4,688.6C910.0,690.7 906.9,682.9 909.7,684.9C912.5,686.9 916.5,694.3 919.3,697.1C922.1,699.9 922.6,700.6 921.9,696.7C921.2,692.8 920.0,687.8 916.3,680.4C912.6,673.0 911.4,672.6 906.0,664.8C900.6,657.0 896.0,651.2 893.0,647.0Z"/></clipPath><g clip-path="url(#hlc)"><rect x="470" y="655" width="60" height="65" fill="#fdfdfd"/><path d="M499.0,664.0C497.9,666.7 497.3,670.1 494.5,675.6C491.7,681.1 490.6,679.4 487.0,687.4C483.4,695.4 480.3,704.1 478.9,709.7C477.5,715.3 479.7,711.7 481.1,711.5C482.5,711.3 481.3,713.8 484.8,708.9C488.3,704.0 491.0,696.3 495.9,690.4C500.8,684.5 503.5,681.6 505.6,683.7C507.7,685.8 504.4,695.1 504.8,699.3C505.2,703.5 505.8,701.9 507.1,701.9C508.4,701.9 508.9,703.0 510.4,699.3C511.9,695.6 511.5,692.1 513.7,686.0C515.9,679.9 518.5,676.0 520.0,673.0Z" fill="none" stroke="#9a9a9a" stroke-width="3" filter="url(#bl2)"/><path d="M505.600,683.700L503,672" stroke="#c8c8c8" stroke-width="2" filter="url(#bl2)"/></g><g clip-path="url(#hrc)"><rect x="870" y="640" width="60" height="65" fill="#fdfdfd"/><path d="M879.0,657.0C881.5,660.9 886.0,666.5 889.7,673.7C893.4,680.9 893.1,684.1 894.8,687.8C896.5,691.5 895.8,689.7 897.1,689.7C898.4,689.7 900.1,691.0 900.4,687.8C900.7,684.6 896.9,675.8 898.5,676.0C900.1,676.2 904.8,686.5 907.4,688.6C910.0,690.7 906.9,682.9 909.7,684.9C912.5,686.9 916.5,694.3 919.3,697.1C922.1,699.9 922.6,700.6 921.9,696.7C921.2,692.8 920.0,687.8 916.3,680.4C912.6,673.0 911.4,672.6 906.0,664.8C900.6,657.0 896.0,651.2 893.0,647.0Z" fill="none" stroke="#9a9a9a" stroke-width="3" filter="url(#bl2)"/><path d="M898.500,676L897,664M899,677L909,686" stroke="#b8b8b8" stroke-width="2.500" filter="url(#bl2)"/></g><path d="M654.500,465L656,481L659.500,487.500C668,498 690,501 702,499C716,500 730,495 738,487.500L752,478L757,466L700,440Z" fill="#ececb2"/><path d="M712.700,412.800C708,416 704,419 699.700,421.900C694,426 688,430 682.800,433.600C677,437 671,441 667.200,445.300C665,448 665.500,451 666,453C667,457 670,460 669.800,463.400C669.500,467 666,470 666,473.800C666,478 668,482 669.800,484.200C674,486 678,486.500 682.800,487.400C686,488 689,489.500 691.900,490.700C695,492 698,494 701.500,496.500C705,493 708,489.500 712.700,486.800C718,484 724,482.800 730.800,481.600C737,480.500 744,480 749,477.700C753,475.500 756,472 756.100,468.600C756.200,465.500 755.500,463 754.200,460.800C751,457 748,454 743.800,450.400C739,447 735,444 730.800,440.100C727,436 723.500,432 720.400,427.100C717.500,422 715,417 712.700,412.800Z" fill="#7d7d46"/><path d="M702,496L712.700,486.800C722,482 740,482 749,477.700C754,475 756.500,470 755,463C752,470 742,474 730,477C720,479.500 712,483 707,489Z" fill="#a3a35c"/><path d="M667,446L678.300,440L680.200,473.800L684,482L670,484C666,478 669.500,468 669.800,463.400C670,458 664,452 667,446Z" fill="#84844a"/><path d="M684,466L681,478L701.500,496L709,484L721,468L718,455Z" fill="#ebebeb"/><path d="M701.500,496L708,482L716,470" fill="none" stroke="#ffffff" stroke-width="3" opacity=".8"/><path d="M686,470L684,478L696,490" fill="none" stroke="#c4c4c4" stroke-width="2.500" filter="url(#bl2)"/><path d="M712.700,414.500C706,417 697,428 696,432C688,436 681,441 681,449C681.500,459 694,471 705,472.500C714,472 726,458 725.700,446C725.500,440 722,435 720.500,431C719,424 716,418 712.700,414.500Z" fill="url(#faceG)"/><path d="M659.5,486.8C658.2,484.6 657.3,489.0 655.6,480.3C653.9,471.6 652.1,475.9 654.3,460.8C656.5,445.7 656.1,452.2 662.1,434.9C668.1,417.6 665.5,424.0 672.4,408.9C679.3,393.8 676.3,397.1 682.8,389.5C689.3,381.9 684.5,387.6 691.9,386.2C699.3,384.8 697.1,384.6 704.9,385.3C712.7,386.0 708.4,385.7 715.3,388.2C722.2,390.7 719.6,385.8 725.6,392.7C731.6,399.6 728.2,397.4 733.4,408.9C738.6,420.4 736.0,415.0 741.2,427.1C746.4,439.2 744.5,434.9 749.0,445.3C753.5,455.7 752.2,450.4 754.8,458.2C757.4,466.0 757.9,462.1 756.8,468.6C755.7,475.1 757.7,472.5 751.6,477.7C745.5,482.9 742.9,482.0 738.6,484.2L702.500,497L659.500,486.800Z M712.700,412.800C708,416 704,419 699.700,421.900C694,426 688,430 682.800,433.600C677,437 671,441 667.200,445.300C665,448 665.500,451 666,453C667,457 670,460 669.800,463.400C669.500,467 666,470 666,473.800C666,478 668,482 669.800,484.200C674,486 678,486.500 682.800,487.400C686,488 689,489.500 691.900,490.700C695,492 698,494 701.500,496.500C705,493 708,489.500 712.700,486.800C718,484 724,482.800 730.800,481.600C737,480.500 744,480 749,477.700C753,475.500 756,472 756.100,468.600C756.200,465.500 755.500,463 754.200,460.800C751,457 748,454 743.800,450.400C739,447 735,444 730.800,440.100C727,436 723.500,432 720.400,427.100C717.500,422 715,417 712.700,412.800Z" fill="url(#hoodG)" fill-rule="evenodd"/><path d="M672,412C668,430 662,450 660,478" fill="none" stroke="#d6d69c" stroke-width="5" filter="url(#bl3)" opacity=".8"/><path d="M657.7,487.4C650.8,490.2 645.0,488.5 632.0,498.0C619.0,507.5 621.0,508.9 609.0,523.0C597.0,537.1 598.2,535.5 587.0,551.0C575.8,566.5 579.7,564.3 567.0,581.0C554.3,597.7 553.1,598.8 539.5,613.7C525.9,628.6 527.7,624.9 516.0,637.0C504.3,649.1 499.8,650.9 495.5,659.0C491.2,667.1 492.0,662.6 500.0,667.5C508.0,672.4 516.8,678.3 525.5,677.5C534.2,676.7 526.2,669.4 532.5,664.5C538.8,659.6 537.3,665.1 549.0,659.0C560.7,652.9 561.7,651.1 576.5,641.5C591.3,631.9 590.9,632.3 604.5,623.0C618.1,613.7 617.2,613.7 627.5,606.5C637.8,599.3 638.9,598.8 643.0,596.0L650,600L664,500Z" fill="url(#slvL)"/><clipPath id="slcL"><path d="M657.7,487.4C650.8,490.2 645.0,488.5 632.0,498.0C619.0,507.5 621.0,508.9 609.0,523.0C597.0,537.1 598.2,535.5 587.0,551.0C575.8,566.5 579.7,564.3 567.0,581.0C554.3,597.7 553.1,598.8 539.5,613.7C525.9,628.6 527.7,624.9 516.0,637.0C504.3,649.1 499.8,650.9 495.5,659.0C491.2,667.1 492.0,662.6 500.0,667.5C508.0,672.4 516.8,678.3 525.5,677.5C534.2,676.7 526.2,669.4 532.5,664.5C538.8,659.6 537.3,665.1 549.0,659.0C560.7,652.9 561.7,651.1 576.5,641.5C591.3,631.9 590.9,632.3 604.5,623.0C618.1,613.7 617.2,613.7 627.5,606.5C637.8,599.3 638.9,598.8 643.0,596.0L650,600L664,500Z"/></clipPath><g clip-path="url(#slcL)"><path d="M532.5,664.5C536.9,663.0 537.3,665.1 549.0,659.0C560.7,652.9 561.7,651.1 576.5,641.5C591.3,631.9 590.9,632.3 604.5,623.0C618.1,613.7 617.2,613.7 627.5,606.5C637.8,599.3 638.9,598.8 643.0,596.0" fill="none" stroke="#c6c68e" stroke-width="16" filter="url(#bl3)"/><path d="M600,520L640,600L655,560L660,500Z" fill="#d0d098" filter="url(#bl3)" opacity=".8"/><path d="M587,551L567,581L539.500,613.700L516,637" fill="none" stroke="#f6f6cc" stroke-width="8" filter="url(#bl3)"/></g><path d="M736.0,486.0C743.5,487.9 750.3,486.2 764.0,493.0C777.7,499.8 775.1,499.8 787.5,511.5C799.9,523.2 795.7,520.2 810.5,537.0C825.3,553.8 827.0,556.0 843.0,574.5C859.0,593.0 856.6,591.2 870.5,606.5C884.4,621.8 888.2,622.7 895.0,632.0C901.8,641.3 900.7,634.7 896.0,641.5C891.3,648.3 885.5,653.2 877.5,657.5C869.5,661.8 875.9,663.0 866.0,657.5C856.1,652.0 854.1,647.4 840.5,637.0C826.9,626.6 827.3,627.8 815.0,618.5C802.7,609.2 803.2,610.7 794.5,602.0C785.8,593.3 787.2,592.1 782.5,586.0C777.8,579.9 778.5,580.9 777.0,579.0L770,585L730,495Z" fill="url(#slvR)"/><clipPath id="slcR"><path d="M736.0,486.0C743.5,487.9 750.3,486.2 764.0,493.0C777.7,499.8 775.1,499.8 787.5,511.5C799.9,523.2 795.7,520.2 810.5,537.0C825.3,553.8 827.0,556.0 843.0,574.5C859.0,593.0 856.6,591.2 870.5,606.5C884.4,621.8 888.2,622.7 895.0,632.0C901.8,641.3 900.7,634.7 896.0,641.5C891.3,648.3 885.5,653.2 877.5,657.5C869.5,661.8 875.9,663.0 866.0,657.5C856.1,652.0 854.1,647.4 840.5,637.0C826.9,626.6 827.3,627.8 815.0,618.5C802.7,609.2 803.2,610.7 794.5,602.0C785.8,593.3 787.2,592.1 782.5,586.0C777.8,579.9 778.5,580.9 777.0,579.0L770,585L730,495Z"/></clipPath><g clip-path="url(#slcR)"><path d="M877.5,657.5C874.4,657.5 875.9,663.0 866.0,657.5C856.1,652.0 854.1,647.4 840.5,637.0C826.9,626.6 827.3,627.8 815.0,618.5C802.7,609.2 803.2,610.7 794.5,602.0C785.8,593.3 787.2,592.1 782.5,586.0C777.8,579.9 778.5,580.9 777.0,579.0" fill="none" stroke="#d0d098" stroke-width="14" filter="url(#bl3)"/><path d="M764,493L787.500,511.500L810.500,537L843,574.500L870.500,606.500" fill="none" stroke="#f7f7d0" stroke-width="8" filter="url(#bl3)"/></g><path d="M657.7,487.4C658.5,488.5 663.1,486.8 661.0,492.0C658.9,497.2 652.8,501.1 648.5,509.5C644.2,517.9 644.1,515.5 642.5,528.0C640.9,540.5 641.5,549.5 641.5,563.0C641.5,576.5 640.9,578.0 642.5,586.0C644.1,594.0 647.7,592.1 648.5,597.5C649.3,602.9 649.9,603.0 646.0,609.0C642.1,615.0 635.7,617.0 632.0,623.0C628.3,629.0 628.8,629.6 630.0,634.5C631.2,639.4 633.7,640.4 637.0,644.0C640.3,647.6 641.9,644.6 644.0,650.0C646.1,655.4 645.5,663.0 646.0,667.0L704,672L748.0,664.5C750.7,662.4 756.7,659.8 759.5,655.5C762.3,651.2 758.4,649.0 760.0,646.0C761.6,643.0 763.6,645.2 766.5,642.5C769.4,639.8 770.6,640.1 772.5,634.5C774.4,628.9 773.2,626.5 774.5,618.5C775.8,610.5 777.4,609.2 778.0,600.0C778.6,590.8 779.1,586.7 777.0,579.0C774.9,571.3 772.0,575.2 769.0,567.0C766.0,558.8 766.8,556.8 764.0,544.0C761.2,531.2 763.3,525.3 757.0,512.0C750.7,498.7 741.7,492.8 737.0,487.0C730,494 716,499 702,498C690,500 668,497 657.700,487.400Z" fill="url(#bodyG)"/><path d="M643,520C652,555 664,590 652,602C646,585 642,560 643,520Z" fill="#c8c890" filter="url(#bl3)"/><path d="M766,540C758,570 760,595 777,584C770,570 768,560 766,540Z" fill="#cccc94" filter="url(#bl3)"/><path d="M640,628C660,640 700,644 760,636L760,646L644,650Z" fill="#d8d8a0" filter="url(#bl3)" opacity=".8"/><path d="M644,651C680,648 730,649 760,646L759.500,655.500L748,664.500L704,672L646,667Z" fill="#e4e4a6"/><path d="M646,667Q700,673 760,660" fill="none" stroke="#b06a50" stroke-width=".8" opacity=".6"/><path d="M712.700,412.800C708,416 704,419 699.700,421.900C694,426 688,430 682.800,433.600C677,437 671,441 667.200,445.300C665,448 665.500,451 666,453C667,457 670,460 669.800,463.400C669.500,467 666,470 666,473.800C666,478 668,482 669.800,484.200C674,486 678,486.500 682.800,487.400C686,488 689,489.500 691.900,490.700C695,492 698,494 701.500,496.500C705,493 708,489.500 712.700,486.800C718,484 724,482.800 730.800,481.600C737,480.500 744,480 749,477.700C753,475.500 756,472 756.100,468.600C756.200,465.500 755.500,463 754.200,460.800C751,457 748,454 743.800,450.400C739,447 735,444 730.800,440.100C727,436 723.500,432 720.400,427.100C717.500,422 715,417 712.700,412.800Z" stroke="#ffff00" fill="none" stroke-linejoin="round" stroke-linecap="round" stroke-width="2.3"/><path d="M684,389C686,388 689,387 692,386.200M704,385.300C706,385.300 707,385.500 708,386" stroke="#ffff00" fill="none" stroke-linejoin="round" stroke-linecap="round" stroke-width="1.8"/><path d="M685,388.500C690,397 695,406 699.700,414.100C697,419 693,423 689.300,427.100C682,432 672,437 666,442.700C664.500,445 664.300,448 664.700,450.400" stroke="#ffff00" fill="none" stroke-linejoin="round" stroke-linecap="round" stroke-width="1.9"/><path d="M724.300,392.100C727,398 729,404 729.500,408.900C729,416 726,422 723,427.100C728,433 733,438 738.600,442.700C744,447 749,451 752.900,455.600" stroke="#ffff00" fill="none" stroke-linejoin="round" stroke-linecap="round" stroke-width="1.9"/><path d="M678.300,444L680.200,473.800" stroke="#ffff00" fill="none" stroke-linejoin="round" stroke-linecap="round" stroke-width="1.7"/><path d="M669.800,484.200C674,483 679,482 682.800,481.600C686,483 689,485 691.900,486.800C693.500,489 695,492 695.800,494.600" stroke="#ffff00" fill="none" stroke-linejoin="round" stroke-linecap="round" stroke-width="1.7"/><path d="M702.300,494.600C705,491 707,488 710.100,485.500C716,482 724,480 730.800,477.700C738,475 746,472 751.600,468.600" stroke="#ffff00" fill="none" stroke-linejoin="round" stroke-linecap="round" stroke-width="1.7"/><path d="M664.700,450.400C666,456 667,460 666.500,464C665,470 663,476 664,481C665,484 667,486 669.800,487" stroke="#ffff00" fill="none" stroke-linejoin="round" stroke-linecap="round" stroke-width="1.6"/><path d="M657.700,487.400C668,497 690,500 702,498C716,499 730,494 737,487" stroke="#ffff00" fill="none" stroke-linejoin="round" stroke-linecap="round" stroke-width="3"/><path d="M657.7,487.4C650.8,490.2 645.0,488.5 632.0,498.0C619.0,507.5 621.0,508.9 609.0,523.0C597.0,537.1 598.2,535.5 587.0,551.0C575.8,566.5 579.7,564.3 567.0,581.0C554.3,597.7 553.1,598.8 539.5,613.7C525.9,628.6 527.7,624.9 516.0,637.0C504.3,649.1 501.0,653.1 495.5,659.0" stroke="#ffff00" fill="none" stroke-linejoin="round" stroke-linecap="round" stroke-width="1.6"/><path d="M525.5,677.5C527.4,674.0 526.2,669.4 532.5,664.5C538.8,659.6 537.3,665.1 549.0,659.0C560.7,652.9 561.7,651.1 576.5,641.5C591.3,631.9 590.9,632.3 604.5,623.0C618.1,613.7 617.2,613.7 627.5,606.5C637.8,599.3 638.9,598.8 643.0,596.0" stroke="#ffff00" fill="none" stroke-linejoin="round" stroke-linecap="round" stroke-width="1.6"/><path d="M736.0,486.0C743.5,487.9 750.3,486.2 764.0,493.0C777.7,499.8 775.1,499.8 787.5,511.5C799.9,523.2 795.7,520.2 810.5,537.0C825.3,553.8 827.0,556.0 843.0,574.5C859.0,593.0 856.6,591.2 870.5,606.5C884.4,621.8 888.2,622.7 895.0,632.0C901.8,641.3 900.7,634.7 896.0,641.5C891.3,648.3 885.5,653.2 877.5,657.5C869.5,661.8 875.9,663.0 866.0,657.5C856.1,652.0 854.1,647.4 840.5,637.0C826.9,626.6 827.3,627.8 815.0,618.5C802.7,609.2 803.2,610.7 794.5,602.0C785.8,593.3 787.2,592.1 782.5,586.0C777.8,579.9 778.5,580.9 777.0,579.0" stroke="#ffff00" fill="none" stroke-linejoin="round" stroke-linecap="round" stroke-width="1.8"/><path d="M661.0,492.0C657.7,496.7 653.4,499.9 648.5,509.5C643.6,519.1 644.4,513.7 642.5,528.0C640.6,542.3 641.5,547.5 641.5,563.0C641.5,578.5 640.6,576.8 642.5,586.0C644.4,595.2 646.9,594.4 648.5,597.5" stroke="#ffff00" fill="none" stroke-linejoin="round" stroke-linecap="round" stroke-width="2.7"/><path d="M731.7,488.5C738.4,494.8 748.4,497.2 757.0,512.0C765.6,526.8 760.8,529.3 764.0,544.0C767.2,558.7 765.5,557.1 769.0,567.0C772.5,576.9 774.9,577.3 777.0,581.0" stroke="#ffff00" fill="none" stroke-linejoin="round" stroke-linecap="round" stroke-width="2.7"/><path d="M587,551L642.600,596.300" stroke="#ffff00" fill="none" stroke-linejoin="round" stroke-linecap="round" stroke-width="2.9"/><path d="M810.500,537.200L789.600,560.400L777,579" stroke="#ffff00" fill="none" stroke-linejoin="round" stroke-linecap="round" stroke-width="2.9"/><path d="M648.5,597.5C647.8,600.6 650.4,602.2 646.0,609.0C641.6,615.8 636.3,616.2 632.0,623.0C627.7,629.8 628.7,628.9 630.0,634.5C631.3,640.1 632.7,640.3 637.0,644.0C641.3,647.7 643.6,647.3 646.0,648.5" stroke="#ffff00" fill="none" stroke-linejoin="round" stroke-linecap="round" stroke-width="2"/><path d="M777.0,579.0C777.3,584.6 778.7,589.5 778.0,600.0C777.3,610.5 776.0,609.3 774.5,618.5C773.0,627.7 774.6,628.1 772.5,634.5C770.4,640.9 770.0,639.4 766.5,642.5C763.0,645.6 761.4,645.1 759.5,646.0" stroke="#ffff00" fill="none" stroke-linejoin="round" stroke-linecap="round" stroke-width="2"/><path d="M700.500,495.500C701,530 705,570 706,600C706,630 704.500,650 703.500,671.600" stroke="#ffff00" fill="none" stroke-linejoin="round" stroke-linecap="round" stroke-width="2.7"/><path d="M648.400,596.300C655,590 660,586.500 664,585.500C680,583 700,581 720,580.800C745,578.500 760,582 776.900,585.900" stroke="#ffff00" fill="none" stroke-linejoin="round" stroke-linecap="round" stroke-width="2.7"/><path d="M635.700,620.600C655,618.500 680,615 704,614C730,611 755,612 774.600,616" stroke="#ffff00" fill="none" stroke-linejoin="round" stroke-linecap="round" stroke-width="2.7"/><path d="M646,648.400C670,651 700,649 720,648.400C740,647.500 752,646 759.500,645" stroke="#ffff00" fill="none" stroke-linejoin="round" stroke-linecap="round" stroke-width="3.2"/><path d="M703.500,671.600L748,664.600L759.500,655.400L759.500,646" stroke="#ffff00" fill="none" stroke-linejoin="round" stroke-linecap="round" stroke-width="2"/><path d="M896,641.500L877.500,657.500" stroke="#ffff00" fill="none" stroke-linejoin="round" stroke-linecap="round" stroke-width="3"/><circle cx="705.900" cy="601.600" r="6.800" fill="none" stroke="#ffff00" stroke-width="1.400"/><circle cx="705.900" cy="601.600" r="3.600" fill="none" stroke="#ffff00" stroke-width="1.400"/><circle cx="690.600" cy="557.600" r="3.800" fill="#0606c8"/></g></svg><div class="a" style="left:463px;top:75px;width:32px;height:65px;background:#3f3f43;border-radius:9px"></div><div class="a" style="left:463px;top:147px;width:32px;height:95px;background:#3f3f43;border-radius:9px"></div><div class="a" style="left:463px;top:249px;width:32px;height:125px;background:#3f3f43;border-radius:9px"></div><svg style="left:463px;top:77px" width="32" height="32" viewBox="-15 -15 30 30"><path d="M0,-8L8,-4V4L0,8L-8,4V-4Z" fill="#9a9a9e"/><path d="M0,-8L8,-4L0,0L-8,-4Z" fill="#d4d4d8"/><path d="M0,0L8,-4V4L0,8Z" fill="#6a6a6e"/><circle cx="-7.500" cy="7" r="2" fill="#c8c8cc"/><path d="M2,9L10,5" stroke="#111" stroke-width="1.500"/></svg><svg style="left:463px;top:107px" width="32" height="32" viewBox="-15 -15 30 30"><path d="M-4,-9L-9.500,-6.500L-12,-1.500L-8.500,0.500L-7,-1V9.500H7V-1L8.500,0.500L12,-1.500L9.500,-6.500L4,-9C3,-6.500-3,-6.500-4,-9Z" fill="#85858a" transform="scale(.8)"/><circle cx="-7.500" cy="7" r="2" fill="#a8a8ac"/><circle cx="2" cy="-1" r="1.800" fill="none" stroke="#b4b4b8" stroke-width=".8"/></svg><svg style="left:463px;top:148px" width="32" height="32" viewBox="-15 -15 30 30"><path d="M-4,-9L-9.500,-6.500L-12,-1.500L-8.500,0.500L-7,-1V9.500H7V-1L8.500,0.500L12,-1.500L9.500,-6.500L4,-9C3,-6.500-3,-6.500-4,-9Z" fill="#f6f6f6" transform="scale(.85)"/></svg><svg style="left:463px;top:178px" width="32" height="32" viewBox="-15 -15 30 30"><circle cx="-5.500" cy="-1" r="3" fill="#e8e8ea"/><path d="M-7,-2h3M-7,0h3" stroke="#444" stroke-width=".7"/><path d="M-2,-4L6,-9" stroke="#e0e0e0" stroke-width="1.200"/><path d="M0,2L4,-2L9,1V9H0Z" fill="#f0f0f0"/><path d="M5,-9L8,-3" stroke="#999" stroke-width=".8"/></svg><svg style="left:463px;top:209px" width="32" height="32" viewBox="-15 -15 30 30"><circle cx="0" cy="-4" r="4.300" fill="#f4f4f4"/><path d="M-8.500,8C-8.500,3,-4,1.500,-2,1H2C4,1.500,8.500,3,8.500,8Z" fill="#f4f4f4"/><path d="M-8.500,8C-5,6,5,6,8.500,8Z" fill="#b8b8bc"/></svg><svg style="left:463px;top:250px" width="32" height="32" viewBox="-15 -15 30 30"><defs><linearGradient id="fb1" x1="0" y1="0" x2="1" y2="1"><stop offset="0" stop-color="#3fa8ff"/><stop offset="1" stop-color="#0d5fd8"/></linearGradient></defs><path d="M-7,-3L-4,7H5L3,-1Z" fill="#d8d8dc"/><path d="M-3,-7L8,-9L6,5L-5,6Z" fill="url(#fb1)"/></svg><svg style="left:463px;top:280px" width="32" height="32" viewBox="-15 -15 30 30"><defs><linearGradient id="fb2" x1="0" y1="0" x2="1" y2="1"><stop offset="0" stop-color="#e0e0e4"/><stop offset=".5" stop-color="#77777b"/><stop offset="1" stop-color="#2a2a2d"/></linearGradient></defs><path d="M-2,-6L8,-9L6,5L-5,7Z" fill="url(#fb2)"/><path d="M-7,-2L-2,-6L-5,7Z" fill="#1a1a1d"/></svg><svg style="left:463px;top:311px" width="32" height="32" viewBox="-15 -15 30 30"><circle cx="0" cy="-3" r="6" fill="#f6d2b4"/><path d="M-2,2h5l1,4l4,3H-8l4,-3z" fill="#eec4a2"/><path d="M-6,9h13" stroke="#d8a888" stroke-width="1"/></svg><svg style="left:463px;top:341px" width="32" height="32" viewBox="-15 -15 30 30"><circle cx="0" cy="0" r="8" fill="none" stroke="#f0f0f0" stroke-width="1.200"/><ellipse cx="0" cy="0" rx="3.500" ry="8" fill="none" stroke="#f0f0f0" stroke-width="1"/><path d="M-8,0H8M0,-8V8M-7,-4H7M-7,4H7" stroke="#f0f0f0" stroke-width="1"/></svg><div class="a" style="left:972px;top:43px;width:596px;height:20px;background:#1d1d20;"></div><div class="t " style="left:1111px;width:300px;text-align:center;top:44.5px;color:#f0f0f0;font-size:12.5px">2D 창</div><svg style="left:1553px;top:48px;" width="12" height="11" viewBox="0 0 12 11"><g fill="none" stroke="#d0d0d0" stroke-width="1.200"><rect x="3.500" y="1" width="8" height="6" rx="1"/><rect x=".7" y="3.500" width="8" height="6" rx="1" fill="#1d1d20"/></g></svg><div class="a" style="left:974px;top:65px;width:517px;height:931px;background:#cbcbcb;background-color:#cacaca;background-image:linear-gradient(#c0c0c0 1px,transparent 1px),linear-gradient(90deg,#c0c0c0 1px,transparent 1px);background-size:7.5px 7.5px;background-position:4.4px 7.3px"></div><div class="a" style="left:1491px;top:65px;width:1px;height:931px;background:#e8e8e8;"></div><div class="a" style="left:1203.2px;top:65px;width:1.4px;height:931px;background:#9c9c9c;"></div><div class="a" style="left:974px;top:724.6px;width:517px;height:1.4px;background:#9c9c9c;"></div><svg style="left:0;top:0" width="1919" height="1079" viewBox="0 0 1919 1079"><path d="M1188,618L1196,613.500H1212L1219.500,618L1249,654L1246,657.500L1215.500,628L1214.500,640L1217,662L1215.500,700L1215.300,722.500L1217,724H1208.500L1206.500,690L1204.200,664L1202,690L1199.500,724H1191L1193,722.500L1192.500,700L1191.800,662L1194,640L1192.500,628L1162,658L1159,655Z" fill="#000" fill-opacity=".05"/><rect x="1197" y="514" width="8" height="27" fill="#78aadc"/><path d="M1197.1,513.1L1185.1,514.9L1179.6,525.1L1179.6,537.8L1186.9,538.4L1195.9,542.0Z" fill="none" stroke="#78aadc" stroke-width="7.3" stroke-linejoin="round"/><path d="M1197.1,513.1L1185.1,514.9L1179.6,525.1L1179.6,537.8L1186.9,538.4L1195.9,542.0Z" fill="#efedee"/><path d="M1197.1,513.1L1185.1,514.9L1179.6,525.1L1179.6,537.8L1186.9,538.4L1195.9,542.0Z" fill="none" stroke="#ffff00" stroke-width="2.1" stroke-linejoin="round"/><path d="M1204.9,513.1L1217.0,514.9L1222.4,525.1L1222.4,537.8L1215.8,538.4L1206.1,542.0Z" fill="none" stroke="#78aadc" stroke-width="7.3" stroke-linejoin="round"/><path d="M1204.9,513.1L1217.0,514.9L1222.4,525.1L1222.4,537.8L1215.8,538.4L1206.1,542.0Z" fill="#efedee"/><path d="M1204.9,513.1L1217.0,514.9L1222.4,525.1L1222.4,537.8L1215.8,538.4L1206.1,542.0Z" fill="none" stroke="#ffff00" stroke-width="2.1" stroke-linejoin="round"/><path d="M1185.500,515.500L1189.500,524M1180,526L1190,526.500M1187,538L1189,529M1216.500,515.500L1212.500,524M1222,526L1212,526.500M1215.500,538L1213,529" stroke="#ee1111" stroke-width="1.300" fill="none"/><path d="M1195,516V540M1207,516V540" stroke="#8a7ac8" stroke-width=".8" stroke-dasharray="1.500 1.500"/><circle cx="1197.1" cy="513.1" r="1.5" fill="#222"/><circle cx="1185.1" cy="514.9" r="1.5" fill="#222"/><circle cx="1179.6" cy="525.1" r="1.5" fill="#222"/><circle cx="1179.6" cy="537.8" r="1.5" fill="#222"/><circle cx="1186.9" cy="538.4" r="1.5" fill="#222"/><circle cx="1195.9" cy="542.0" r="1.5" fill="#222"/><circle cx="1204.9" cy="513.1" r="1.5" fill="#222"/><circle cx="1217.0" cy="514.9" r="1.5" fill="#222"/><circle cx="1222.4" cy="525.1" r="1.5" fill="#222"/><circle cx="1222.4" cy="537.8" r="1.5" fill="#222"/><circle cx="1215.8" cy="538.4" r="1.5" fill="#222"/><circle cx="1206.1" cy="542.0" r="1.5" fill="#222"/><rect x="1238.500" y="502" width="8" height="37" fill="#efedee"/><path d="M1246.500,502V539" stroke="#a4ecf4" stroke-width="2.400"/><path d="M1239,502V539" stroke="#ffff00" stroke-width="2.200"/><path d="M1242.500,502V539" stroke="#222" stroke-width="1.200" stroke-dasharray="3 2"/><path d="M1236,514.500H1249M1236,526H1249" stroke="#ee1111" stroke-width=".8" stroke-dasharray="2 1.500"/><circle cx="1239.0" cy="502.0" r="1.5" fill="#222"/><circle cx="1243.0" cy="502.0" r="1.5" fill="#222"/><circle cx="1239.0" cy="514.5" r="1.5" fill="#222"/><circle cx="1239.0" cy="526.0" r="1.5" fill="#222"/><circle cx="1239.0" cy="539.0" r="1.5" fill="#222"/><circle cx="1243.0" cy="539.0" r="1.5" fill="#222"/><path d="M1144.7,561.0L1147.1,561.0L1147.1,614.3L1136.3,614.3L1129.4,581.7L1138.1,573.3Z" fill="none" stroke="#78aadc" stroke-width="7.3" stroke-linejoin="round"/><path d="M1144.7,561.0L1147.1,561.0L1147.1,614.3L1136.3,614.3L1129.4,581.7L1138.1,573.3Z" fill="#efedee"/><path d="M1144.7,561.0L1147.1,561.0L1147.1,614.3L1136.3,614.3L1129.4,581.7L1138.1,573.3Z" fill="none" stroke="#ffff00" stroke-width="2.1" stroke-linejoin="round"/><path d="M1151.6,561.0L1155.5,561.5L1160.4,573.3L1169.6,581.7L1162.4,614.3L1151.6,614.3Z" fill="none" stroke="#78aadc" stroke-width="7.3" stroke-linejoin="round"/><path d="M1151.6,561.0L1155.5,561.5L1160.4,573.3L1169.6,581.7L1162.4,614.3L1151.6,614.3Z" fill="#efedee"/><path d="M1151.6,561.0L1155.5,561.5L1160.4,573.3L1169.6,581.7L1162.4,614.3L1151.6,614.3Z" fill="none" stroke="#ffff00" stroke-width="2.1" stroke-linejoin="round"/><path d="M1137,568.500L1147,568M1139,574L1146.5,578M1162,568.500L1152,568M1160,574L1152.5,578" stroke="#ee1111" stroke-width="1.200" fill="none"/><path d="M1130,581.700H1169" stroke="#9a8ac8" stroke-width=".7" stroke-dasharray="1.500 1.500"/><circle cx="1144.7" cy="561.0" r="1.5" fill="#222"/><circle cx="1147.1" cy="561.0" r="1.5" fill="#222"/><circle cx="1147.1" cy="614.3" r="1.5" fill="#222"/><circle cx="1136.3" cy="614.3" r="1.5" fill="#222"/><circle cx="1129.4" cy="581.7" r="1.5" fill="#222"/><circle cx="1138.1" cy="573.3" r="1.5" fill="#222"/><circle cx="1151.6" cy="561.0" r="1.5" fill="#222"/><circle cx="1155.5" cy="561.5" r="1.5" fill="#222"/><circle cx="1160.4" cy="573.3" r="1.5" fill="#222"/><circle cx="1169.6" cy="581.7" r="1.5" fill="#222"/><circle cx="1162.4" cy="614.3" r="1.5" fill="#222"/><circle cx="1151.6" cy="614.3" r="1.5" fill="#222"/><circle cx="1147.1" cy="581.7" r="1.5" fill="#222"/><circle cx="1151.6" cy="581.7" r="1.5" fill="#222"/><circle cx="1147.1" cy="568.0" r="1.5" fill="#222"/><circle cx="1151.6" cy="568.0" r="1.5" fill="#222"/><path d="M1250.2,561.0L1252.6,561.0L1252.6,614.3L1241.8,614.3L1234.9,581.7L1243.6,573.3Z" fill="none" stroke="#78aadc" stroke-width="7.3" stroke-linejoin="round"/><path d="M1250.2,561.0L1252.6,561.0L1252.6,614.3L1241.8,614.3L1234.9,581.7L1243.6,573.3Z" fill="#efedee"/><path d="M1250.2,561.0L1252.6,561.0L1252.6,614.3L1241.8,614.3L1234.9,581.7L1243.6,573.3Z" fill="none" stroke="#ffff00" stroke-width="2.1" stroke-linejoin="round"/><path d="M1257.1,561.0L1261.0,561.5L1265.9,573.3L1275.1,581.7L1267.9,614.3L1257.1,614.3Z" fill="none" stroke="#78aadc" stroke-width="7.3" stroke-linejoin="round"/><path d="M1257.1,561.0L1261.0,561.5L1265.9,573.3L1275.1,581.7L1267.9,614.3L1257.1,614.3Z" fill="#efedee"/><path d="M1257.1,561.0L1261.0,561.5L1265.9,573.3L1275.1,581.7L1267.9,614.3L1257.1,614.3Z" fill="none" stroke="#ffff00" stroke-width="2.1" stroke-linejoin="round"/><path d="M1242.5,568.500L1252.5,568M1244.5,574L1252.0,578M1267.5,568.500L1257.5,568M1265.5,574L1258.0,578" stroke="#ee1111" stroke-width="1.200" fill="none"/><path d="M1235.5,581.700H1274.5" stroke="#9a8ac8" stroke-width=".7" stroke-dasharray="1.500 1.500"/><circle cx="1250.2" cy="561.0" r="1.5" fill="#222"/><circle cx="1252.6" cy="561.0" r="1.5" fill="#222"/><circle cx="1252.6" cy="614.3" r="1.5" fill="#222"/><circle cx="1241.8" cy="614.3" r="1.5" fill="#222"/><circle cx="1234.9" cy="581.7" r="1.5" fill="#222"/><circle cx="1243.6" cy="573.3" r="1.5" fill="#222"/><circle cx="1257.1" cy="561.0" r="1.5" fill="#222"/><circle cx="1261.0" cy="561.5" r="1.5" fill="#222"/><circle cx="1265.9" cy="573.3" r="1.5" fill="#222"/><circle cx="1275.1" cy="581.7" r="1.5" fill="#222"/><circle cx="1267.9" cy="614.3" r="1.5" fill="#222"/><circle cx="1257.1" cy="614.3" r="1.5" fill="#222"/><circle cx="1252.6" cy="581.7" r="1.5" fill="#222"/><circle cx="1257.1" cy="581.7" r="1.5" fill="#222"/><circle cx="1252.6" cy="568.0" r="1.5" fill="#222"/><circle cx="1257.1" cy="568.0" r="1.5" fill="#222"/><path d="M1170,587.500H1181M1226,587.500H1234" stroke="#78aadc" stroke-width="1.500"/><path d="M1197.1,573.3L1203.7,575.5L1211.0,573.3L1218.8,583.0L1225.8,592.6L1225.8,607.0L1182.4,607.0L1182.4,592.6L1189.3,583.0Z" fill="none" stroke="#78aadc" stroke-width="7.3" stroke-linejoin="round"/><path d="M1197.1,573.3L1203.7,575.5L1211.0,573.3L1218.8,583.0L1225.8,592.6L1225.8,607.0L1182.4,607.0L1182.4,592.6L1189.3,583.0Z" fill="#efedee"/><path d="M1197.1,573.3L1203.7,575.5L1211.0,573.3L1218.8,583.0L1225.8,592.6L1225.8,607.0L1182.4,607.0L1182.4,592.6L1189.3,583.0Z" fill="none" stroke="#ffff00" stroke-width="2.1" stroke-linejoin="round"/><path d="M1203.700,575.500V607" stroke="#ffff00" stroke-width="2"/><path d="M1183,592.500H1226M1183,600H1226" stroke="#9a8ac8" stroke-width=".8" stroke-dasharray="1.500 1.500"/><circle cx="1197.1" cy="573.3" r="1.5" fill="#222"/><circle cx="1203.7" cy="575.5" r="1.5" fill="#222"/><circle cx="1211.0" cy="573.3" r="1.5" fill="#222"/><circle cx="1218.8" cy="583.0" r="1.5" fill="#222"/><circle cx="1225.8" cy="592.6" r="1.5" fill="#222"/><circle cx="1225.8" cy="607.0" r="1.5" fill="#222"/><circle cx="1182.4" cy="607.0" r="1.5" fill="#222"/><circle cx="1182.4" cy="592.6" r="1.5" fill="#222"/><circle cx="1189.3" cy="583.0" r="1.5" fill="#222"/><circle cx="1203.7" cy="607.0" r="1.5" fill="#222"/><circle cx="1182.4" cy="600.0" r="1.5" fill="#222"/><circle cx="1225.8" cy="600.0" r="1.5" fill="#222"/><circle cx="1201" cy="588" r="3.100" fill="#0606e0"/><path d="M1303.0,573.0L1310.0,573.0L1318.0,583.0L1325.5,593.0L1325.5,607.5L1303.0,607.5Z" fill="none" stroke="#a4ecf4" stroke-width="4.8" stroke-linejoin="round"/><path d="M1303.0,573.0L1310.0,573.0L1318.0,583.0L1325.5,593.0L1325.5,607.5L1303.0,607.5Z" fill="#efedee"/><path d="M1303.0,573.0L1303.0,607.5L1281.5,607.5L1281.5,593.0L1289.0,583.0L1297.0,573.0Z" fill="none" stroke="#ffff00" stroke-width="4.4" stroke-linejoin="round"/><path d="M1303.0,573.0L1303.0,607.5L1281.5,607.5L1281.5,593.0L1289.0,583.0L1297.0,573.0Z" fill="#efedee"/><path d="M1303,573V607.500" stroke="#222" stroke-width="1.500" stroke-dasharray="4 1.500"/><path d="M1283,600H1324" stroke="#9a8ac8" stroke-width=".8" stroke-dasharray="1.500 1.500"/><circle cx="1297.0" cy="573.0" r="1.5" fill="#222"/><circle cx="1303.0" cy="573.0" r="1.5" fill="#222"/><circle cx="1289.0" cy="583.0" r="1.5" fill="#222"/><circle cx="1281.5" cy="593.0" r="1.5" fill="#222"/><circle cx="1281.5" cy="600.0" r="1.5" fill="#222"/><circle cx="1281.5" cy="607.5" r="1.5" fill="#222"/><circle cx="1303.0" cy="607.5" r="1.5" fill="#222"/><rect x="1140.5" y="631" width="17" height="5.500" fill="#78aadc"/><rect x="1139.5" y="620.500" width="19" height="14" fill="#ffff00"/><circle cx="1141.8" cy="622" r="3.400" fill="#ffff00"/><circle cx="1156.2" cy="622" r="3.400" fill="#ffff00"/><circle cx="1141.8" cy="633" r="3.400" fill="#ffff00"/><circle cx="1156.2" cy="633" r="3.400" fill="#ffff00"/><rect x="1145.0" y="623.800" width="8" height="2.200" fill="#efedee"/><rect x="1145.0" y="628.800" width="8" height="2.200" fill="#efedee"/><circle cx="1142.3" cy="627.500" r="1.500" fill="#8a3a10"/><circle cx="1155.7" cy="627.500" r="1.500" fill="#8a3a10"/><rect x="1245" y="631" width="17" height="5.500" fill="#78aadc"/><rect x="1244" y="620.500" width="19" height="14" fill="#ffff00"/><circle cx="1246.3" cy="622" r="3.400" fill="#ffff00"/><circle cx="1260.7" cy="622" r="3.400" fill="#ffff00"/><circle cx="1246.3" cy="633" r="3.400" fill="#ffff00"/><circle cx="1260.7" cy="633" r="3.400" fill="#ffff00"/><rect x="1249.5" y="623.800" width="8" height="2.200" fill="#efedee"/><rect x="1249.5" y="628.800" width="8" height="2.200" fill="#efedee"/><circle cx="1246.8" cy="627.500" r="1.500" fill="#8a3a10"/><circle cx="1260.2" cy="627.500" r="1.500" fill="#8a3a10"/><path d="M1160,626.800H1243" stroke="#7096c0" stroke-width="1.400"/><rect x="1200" y="639.500" width="32" height="13" fill="#a6eef6"/><circle cx="1202.7" cy="640.8" r="3.700" fill="#a6eef6"/><circle cx="1217.1" cy="640.8" r="3.700" fill="#a6eef6"/><circle cx="1202.7" cy="651.4" r="3.700" fill="#a6eef6"/><circle cx="1217.1" cy="651.4" r="3.700" fill="#a6eef6"/><rect x="1205" y="642.300" width="25" height="2.200" fill="#efedee"/><rect x="1205" y="647.500" width="25" height="2.200" fill="#efedee"/><rect x="1231" y="639.500" width="33" height="13" fill="#ffff00"/><circle cx="1232.8" cy="640.8" r="3.700" fill="#ffff00"/><circle cx="1247.2" cy="640.8" r="3.700" fill="#ffff00"/><circle cx="1262.3" cy="640.8" r="3.700" fill="#ffff00"/><circle cx="1232.8" cy="651.4" r="3.700" fill="#ffff00"/><circle cx="1247.2" cy="651.4" r="3.700" fill="#ffff00"/><circle cx="1262.3" cy="651.4" r="3.700" fill="#ffff00"/><rect x="1236" y="642.300" width="24" height="2.200" fill="#efedee"/><rect x="1236" y="647.500" width="24" height="2.200" fill="#efedee"/><path d="M1203,645.900H1231.500" stroke="#ffff00" stroke-width="2"/><path d="M1233,645.900H1262.500" stroke="#4cd4e8" stroke-width="2"/><path d="M1232.200,641.500V650.800" stroke="#111" stroke-width="2.600"/><circle cx="1202.700" cy="645.900" r="1.500" fill="#8a3a10"/><g fill="none" stroke="#111" stroke-width="1" stroke-dasharray="4 3" shape-rendering="crispEdges"><rect x="1109.500" y="481.500" width="235" height="189"/><path d="M1227.500,481V453"/></g><path d="M1110,576.500H1345M1227.500,482V670" stroke="#8a8a8a" stroke-width="1" stroke-dasharray="4 3" fill="none" opacity=".8" shape-rendering="crispEdges"/><circle cx="1109.5" cy="481.5" r="2.800" fill="#cfcfcf" stroke="#111" stroke-width="1"/><circle cx="1227.5" cy="481.5" r="2.800" fill="#cfcfcf" stroke="#111" stroke-width="1"/><circle cx="1344.5" cy="481.5" r="2.800" fill="#cfcfcf" stroke="#111" stroke-width="1"/><circle cx="1109.5" cy="576.5" r="2.800" fill="#cfcfcf" stroke="#111" stroke-width="1"/><circle cx="1344.5" cy="576.5" r="2.800" fill="#cfcfcf" stroke="#111" stroke-width="1"/><circle cx="1109.5" cy="670.5" r="2.800" fill="#cfcfcf" stroke="#111" stroke-width="1"/><circle cx="1227.5" cy="670.5" r="2.800" fill="#cfcfcf" stroke="#111" stroke-width="1"/><circle cx="1344.5" cy="670.5" r="2.800" fill="#cfcfcf" stroke="#111" stroke-width="1"/><circle cx="1227.5" cy="452.5" r="2.800" fill="#cfcfcf" stroke="#111" stroke-width="1"/><path d="M1227.500,572.500L1231.500,576.500L1227.500,580.500L1223.500,576.500Z" fill="#cfcfcf" stroke="#111" stroke-width="1"/></svg><div class="a" style="left:984px;top:73px;width:32px;height:156px;background:#48484b;border-radius:9px"></div><svg style="left:984px;top:76px" width="32" height="32" viewBox="-15 -15 30 30"><path d="M-9,7L6,-6" stroke="#e4e4e4" stroke-width="1.500"/><path d="M2,-4C5,-9,9,-6,7,-2S9,3,10,1" fill="none" stroke="#3f9cf4" stroke-width="1.300"/></svg><svg style="left:984px;top:106px" width="32" height="32" viewBox="-15 -15 30 30"><path d="M-4,-9L-9.500,-6.500L-12,-1.500L-8.500,0.500L-7,-1V9.500H7V-1L8.500,0.500L12,-1.500L9.500,-6.500L4,-9C3,-6.500-3,-6.500-4,-9Z" fill="#f8f8f8" transform="scale(.82)"/></svg><svg style="left:984px;top:137px" width="32" height="32" viewBox="-15 -15 30 30"><circle cx="0" cy="0" r="8.300" fill="#ececf0"/><text x="0" y="5" text-anchor="middle" font-family="Liberation Serif,serif" font-style="italic" font-weight="bold" font-size="14" fill="#2f6fe8">i</text></svg><svg style="left:984px;top:167px" width="32" height="32" viewBox="-15 -15 30 30"><defs><linearGradient id="fb3" x1="0" y1="0" x2="1" y2="1"><stop offset="0" stop-color="#3fa8ff"/><stop offset="1" stop-color="#0d5fd8"/></linearGradient></defs><path d="M-7,-3L-4,7H5L3,-1Z" fill="#d8d8dc"/><path d="M-3,-7L8,-9L6,5L-5,6Z" fill="url(#fb3)"/></svg><svg style="left:984px;top:197px" width="32" height="32" viewBox="-15 -15 30 30"><path d="M-4,-9L-9.500,-6.500L-12,-1.500L-8.500,0.500L-7,-1V9.500H7V-1L8.500,0.500L12,-1.500L9.500,-6.500L4,-9C3,-6.500-3,-6.500-4,-9Z" fill="#f8f8f8" transform="translate(1,-1) scale(.82)"/><rect x="-9" y="2" width="6" height="5.500" fill="#3f8cf4"/><path d="M-7.500,2V0a1.500,1.500 0 0 1 3,0V2" fill="none" stroke="#3f8cf4" stroke-width="1.100"/></svg><div class="a" style="left:375px;top:63px;width:76px;height:934px;background:#232326;"></div><div class="a" style="left:413px;top:63px;width:1px;height:934px;background:#1e1e21;"></div><div class="a" style="left:380px;top:71.5px;width:28px;height:1px;background:#101012;"></div><div class="a" style="left:380px;top:119.5px;width:28px;height:1px;background:#101012;"></div><div class="a" style="left:380px;top:199.5px;width:28px;height:1px;background:#101012;"></div><div class="a" style="left:380px;top:247.5px;width:28px;height:1px;background:#101012;"></div><div class="a" style="left:380px;top:391.5px;width:28px;height:1px;background:#101012;"></div><div class="a" style="left:380px;top:471.5px;width:28px;height:1px;background:#101012;"></div><div class="a" style="left:380px;top:679.5px;width:28px;height:1px;background:#101012;"></div><div class="a" style="left:380px;top:727px;width:28px;height:1px;background:#101012;"></div><div class="a" style="left:380px;top:807px;width:28px;height:1px;background:#101012;"></div><div class="a" style="left:418px;top:71.5px;width:28px;height:1px;background:#101012;"></div><div class="a" style="left:418px;top:119.5px;width:28px;height:1px;background:#101012;"></div><div class="a" style="left:418px;top:231.5px;width:28px;height:1px;background:#101012;"></div><div class="a" style="left:418px;top:311.5px;width:28px;height:1px;background:#101012;"></div><div class="a" style="left:418px;top:423.5px;width:28px;height:1px;background:#101012;"></div><div class="a" style="left:418px;top:535.5px;width:28px;height:1px;background:#101012;"></div><div class="a" style="left:418px;top:615px;width:28px;height:1px;background:#101012;"></div><div class="a" style="left:418px;top:695.5px;width:28px;height:1px;background:#101012;"></div><div class="a" style="left:418px;top:775px;width:28px;height:1px;background:#101012;"></div><div class="a" style="left:378px;top:80px;width:32px;height:28px;background:#101012;border:1px solid #060607;border-radius:5px"></div><svg style="left:378px;top:78px" width="32" height="32" viewBox="-14.800 -14.800 29.600 29.600"><defs><linearGradient id="gArr1" x1="0" y1="0" x2="0" y2="1"><stop offset="0" stop-color="#1b3f9a"/><stop offset=".45" stop-color="#2f83f0"/><stop offset="1" stop-color="#46a6ff"/></linearGradient></defs><path d="M-4.500,-11H4.500V-1H9.500L0,9.500L-9.500,-1H-4.500Z" fill="url(#gArr1)"/><path d="M13.500,6.500V12H8Z" fill="#a2a2a6"/></svg><div class="a" style="left:378px;top:128px;width:32px;height:28px;background:#101012;border:1px solid #060607;border-radius:5px"></div><svg style="left:378px;top:126px" width="32" height="32" viewBox="-14.800 -14.800 29.600 29.600"><path d="M-10,-2L-5,-7.500C-3,-9.500,-1,-9,1,-8L8,-3C10,-1,12,3,11,6C10,9,6,9.500,3,8.500L-4,4C-6,4,-7,2,-6,1Z" fill="#e9e9ec"/><path d="M-10,-2L-6.500,-4L-4,-1.500L-6,1Z" fill="#3f9cf4"/><path d="M-3,-1.500C-1,-2.500,1,-1.500,2,0" fill="none" stroke="#444" stroke-width="1.200"/><path d="M3,8.500C6,9.500,10,9,11,6C9,8,6,8,3,6.500Z" fill="#a8a8ac"/><path d="M13.500,6.500V12H8Z" fill="#a2a2a6"/></svg><svg style="left:378px;top:158px" width="32" height="32" viewBox="-14.800 -14.800 29.600 29.600"><path d="M-11.500,-9.500L-5.300,-6L-11.500,-2.500Z" fill="#8e8e92"/><circle cx="-1" cy="0" r="6.500" fill="none" stroke="#b9b9bd" stroke-width="1.300" stroke-dasharray="1.500 2"/><path d="M5,2L9.5,-7" stroke="#e8e8ea" stroke-width="2.600" stroke-linecap="round"/><path d="M1,7C3,3,6,3,7,5C6,8,3,8.500,1,7Z" fill="#e8e8ea"/><path d="M13.500,6.500V12H8Z" fill="#a2a2a6"/></svg><svg style="left:378px;top:206px" width="32" height="32" viewBox="-14.800 -14.800 29.600 29.600"><path d="M-11.500,-9.500L-5.300,-6L-11.500,-2.500Z" fill="#8e8e92"/><defs><linearGradient id="gS34" x1="0" y1="0" x2="1" y2="0"><stop offset="0" stop-color="#6e6e72"/><stop offset=".5" stop-color="#d8d8dc"/><stop offset="1" stop-color="#6e6e72"/></linearGradient></defs><path d="M-4,-9L-9.500,-6.500L-12,-1.500L-8.500,0.500L-7,-1V9.500H7V-1L8.500,0.500L12,-1.500L9.500,-6.500L4,-9C3,-6.500-3,-6.500-4,-9Z" fill="url(#gS34)" transform="translate(1,1) scale(.9)"/><path d="M-7,8.500C-3,11,5,11,9,8.500" fill="none" stroke="#e8e8ea" stroke-width="1.800"/><path d="M13.500,6.500V12H8Z" fill="#a2a2a6"/></svg><svg style="left:378px;top:254px" width="32" height="32" viewBox="-14.800 -14.800 29.600 29.600"><path d="M-11.500,-9.500L-5.300,-6L-11.500,-2.500Z" fill="#8e8e92"/><g transform="translate(2,1)" fill="#7f7f83"><path d="M-7,-6.500H2V-8.500H5V-6.500H8V6H2.500V-1H-2V1H-3.500V4H-5V1H-7Z"/><rect x="-8" y="7.500" width="16" height="1.300" fill="#b9b9bd"/></g></svg><svg style="left:378px;top:286px" width="32" height="32" viewBox="-14.800 -14.800 29.600 29.600"><g transform="translate(2,-3)" fill="#6c6c70"><path d="M-7,-6.500H2V-8.500H5V-6.500H8V6H2.500V-1H-2V1H-3.500V4H-5V1H-7Z"/><rect x="-8" y="7.500" width="16" height="1.300" fill="#b9b9bd"/></g><circle cx="-9" cy="5" r="1.400" fill="#e8e8ea"/><circle cx="-9" cy="9.5" r="1.400" fill="#e8e8ea"/><circle cx="-2" cy="5" r="1.400" fill="#e8e8ea"/><circle cx="-2" cy="9.5" r="1.400" fill="#e8e8ea"/><circle cx="5" cy="5" r="1.400" fill="#e8e8ea"/><circle cx="5" cy="9.5" r="1.400" fill="#e8e8ea"/><path d="M-9,5H5M-9,9.500H5M-9,5V9.500M-2,5V9.500M5,5V9.500" stroke="#e8e8ea" stroke-width="1"/><path d="M13.500,6.500V12H8Z" fill="#a2a2a6"/></svg><svg style="left:378px;top:318px" width="32" height="32" viewBox="-14.800 -14.800 29.600 29.600"><g transform="translate(2,-3)" fill="#6c6c70"><path d="M-7,-6.500H2V-8.500H5V-6.500H8V6H2.500V-1H-2V1H-3.500V4H-5V1H-7Z"/><rect x="-8" y="7.500" width="16" height="1.300" fill="#b9b9bd"/></g><path d="M-10,8C-6,4,-4,9,-1,8S4,5,7,7" fill="none" stroke="#b9b9bd" stroke-width="1.300"/><circle cx="-2" cy="8" r="1.600" fill="#e8e8ea"/><path d="M13.500,6.500V12H8Z" fill="#a2a2a6"/></svg><svg style="left:378px;top:350px" width="32" height="32" viewBox="-14.800 -14.800 29.600 29.600"><circle cx="-5" cy="-8" r="2.500" fill="#5e5e62"/><path d="M-10,-4h10v13h-10z" fill="#b9b9bd"/><path d="M-5,-4v13" stroke="#5e5e62" stroke-width="1.500"/><g transform="translate(6,4) scale(.6)"><g transform="translate(0,0)" fill="#7f7f83"><path d="M-7,-6.500H2V-8.500H5V-6.500H8V6H2.500V-1H-2V1H-3.500V4H-5V1H-7Z"/><rect x="-8" y="7.500" width="16" height="1.300" fill="#b9b9bd"/></g></g></svg><svg style="left:378px;top:398px" width="32" height="32" viewBox="-14.800 -14.800 29.600 29.600"><path d="M-11.500,-9.500L-5.300,-6L-11.500,-2.500Z" fill="#8e8e92"/><path d="M-5,9L5,-5" stroke="#7f7f83" stroke-width="1.400"/><circle cx="6" cy="-6" r="2.600" fill="#e8e8ea"/></svg><svg style="left:378px;top:430px" width="32" height="32" viewBox="-14.800 -14.800 29.600 29.600"><defs><linearGradient id="gCy10" x1="0" y1="0" x2="1" y2="1"><stop offset="0" stop-color="#bdbdc1"/><stop offset="1" stop-color="#3c3c40"/></linearGradient></defs><path d="M-9,-4C-5,-10,5,-10,8,-4V6C6,3,0,2,-3,8C-9,9,-12,2,-9,-4Z" fill="url(#gCy10)"/><ellipse cx="-5" cy="3" rx="3" ry="5" fill="#1c1c1f"/><path d="M2,-1L7,3" stroke="#e8e8ea" stroke-width="1.300"/><circle cx="8" cy="4" r="2.400" fill="#e8e8ea"/><path d="M-11,-6l4,2" stroke="#b9b9bd" stroke-width="1"/><path d="M13.500,6.500V12H8Z" fill="#a2a2a6"/></svg><svg style="left:378px;top:478px" width="32" height="32" viewBox="-14.800 -14.800 29.600 29.600"><path d="M-9,-1L-1,-8V0L-9,8Z" fill="none" stroke="#7f7f83" stroke-width="1.200"/><path d="M-9,8L1,8L10,1H-1Z" fill="none" stroke="#7f7f83" stroke-width="1.200"/><path d="M-4,-3h5c3,0,5,2,5,5l-2,-1l-1,3l-3,-4h-4z" fill="#e8e8ea"/></svg><svg style="left:378px;top:510px" width="32" height="32" viewBox="-14.800 -14.800 29.600 29.600"><path d="M-5,-9H5L11,-4L10,7H-10L-11,-4Z" fill="#7f7f83"/><path d="M-5,-9L0,-3L5,-9M0,-3V7" fill="none" stroke="#5e5e62" stroke-width="1.200"/><rect x="-10" y="7.500" width="20" height="2" fill="#7f7f83"/></svg><svg style="left:378px;top:542px" width="32" height="32" viewBox="-14.800 -14.800 29.600 29.600"><path d="M-5,-8L-12,-3L-10,1L-6,-1V2H-1V-8Z" fill="#7f7f83"/><path d="M5,-8L12,-3L10,1L6,-1V2H1V-8Z" fill="#7f7f83"/><rect x="-6" y="3.500" width="5" height="6" fill="#7f7f83"/><rect x="1" y="3.500" width="5" height="6" fill="#7f7f83"/></svg><svg style="left:378px;top:574px" width="32" height="32" viewBox="-14.800 -14.800 29.600 29.600"><circle cx="0" cy="-8" r="3" fill="#5e5e62"/><path d="M-4,-4h8l2,14h-12z" fill="#5e5e62"/><path d="M-10,-2c3,1.500,6,1.500,8,0V9c-2,1.500,-5,1.500,-8,0z" fill="#b9b9bd"/><path d="M10,-2c-3,1.500,-6,1.500,-8,0V9c2,1.500,5,1.500,8,0z" fill="#b9b9bd"/></svg><svg style="left:378px;top:606px" width="32" height="32" viewBox="-14.800 -14.800 29.600 29.600"><circle cx="0" cy="-8" r="3" fill="#5e5e62"/><path d="M-4,-4h8l2,14h-12z" fill="#5e5e62"/><path d="M-10,-2c3,1.500,6,1.500,8,0V9c-2,1.500,-5,1.500,-8,0z" fill="#b9b9bd"/><path d="M10,-2c-3,1.500,-6,1.500,-8,0V9c2,1.500,5,1.500,8,0z" fill="#b9b9bd"/><path d="M-9.500,-6A2.500,2.500 0 1 1 -7.500,-9.500" fill="none" stroke="#b9b9bd" stroke-width="1.200"/><path d="M-8,-11.500l1.500,2.500l-3,.3z" fill="#b9b9bd"/></svg><svg style="left:378px;top:638px" width="32" height="32" viewBox="-14.800 -14.800 29.600 29.600"><circle cx="0" cy="-8.500" r="2.800" fill="#5e5e62"/><path d="M-11,5L-8,-2" stroke="#5e5e62" stroke-width="2"/><path d="M11,5L8,-2" stroke="#5e5e62" stroke-width="2"/><path d="M-3,-5L-7,-3L-9,2L-5,3V8H5V3L9,2L7,-3L3,-5C2,-3,-2,-3,-3,-5Z" fill="#98989c"/></svg><svg style="left:378px;top:686px" width="32" height="32" viewBox="-14.800 -14.800 29.600 29.600"><path d="M-8,-8L-3,-9L1,-6V9H-6V0L-11,-2Z" fill="none" stroke="#b9b9bd" stroke-width="1.100"/><path d="M-8,-8L-3,-3L1,-6M-3,-3L-6,0M-3,-3L1,2L-6,5L1,9M-6,0L1,2" stroke="#b9b9bd" stroke-width=".8" fill="none"/><path d="M8,10V-7" stroke="#e8e8ea" stroke-width="1.600"/><path d="M5,-6L8,-10.500L11,-6Z" fill="#e8e8ea"/><path d="M13.500,6.500V12H8Z" fill="#a2a2a6"/></svg><svg style="left:378px;top:734px" width="32" height="32" viewBox="-14.800 -14.800 29.600 29.600"><path d="M-11.500,-9.500L-5.300,-6L-11.500,-2.500Z" fill="#8e8e92"/><path d="M6,-9C-2,-9,-6,-4,-3,1S6,7,10,5" fill="none" stroke="#7f7f83" stroke-width="4.500"/><path d="M-3,2l2,-2M0,5l1.500,-2.500M4,7l.8,-2.800M8,7.500v-3" stroke="#d8d8dc" stroke-width=".9"/><path d="M13.500,6.500V12H8Z" fill="#a2a2a6"/></svg><svg style="left:378px;top:766px" width="32" height="32" viewBox="-14.800 -14.800 29.600 29.600"><g transform="rotate(-38)"><rect x="-11" y="-2.500" width="19" height="6" fill="#7f7f83"/><path d="M-9,-2.500v3M-6.500,-2.500v2M-4,-2.500v3M-1.500,-2.500v2M1,-2.500v3M3.500,-2.500v2M6,-2.500v3" stroke="#c8c8cc" stroke-width=".9"/></g><path d="M6,-6.500C10,-8,11,-3,8,-1" fill="none" stroke="#7f7f83" stroke-width="4"/><path d="M13.500,6.500V12H8Z" fill="#a2a2a6"/></svg><svg style="left:378px;top:814px" width="32" height="32" viewBox="-14.800 -14.800 29.600 29.600"><path d="M-11.500,-9.500L-5.300,-6L-11.500,-2.500Z" fill="#8e8e92"/><g transform="translate(2.500,1) scale(.86)"><path d="M-4,-9L-9.500,-6.500L-12,-1.500L-8.500,0.500L-7,-1V9.500H7V-1L8.500,0.500L12,-1.500L9.500,-6.500L4,-9C3,-6.500-3,-6.500-4,-9Z" fill="#6e6e72" transform="translate(1,1) scale(0.95)"/><rect x="-2" y="-6" width="5" height="15" fill="#d8d8dc"/><path d="M-2,-4h3M-2,-2h2M-2,0h3M-2,2h2M-2,4h3M-2,6h2" stroke="#444" stroke-width=".8"/></g></svg><svg style="left:378px;top:846px" width="32" height="32" viewBox="-14.800 -14.800 29.600 29.600"><path d="M-4,-9L-9.500,-6.500L-12,-1.500L-8.500,0.500L-7,-1V9.500H7V-1L8.500,0.500L12,-1.500L9.500,-6.500L4,-9C3,-6.500-3,-6.500-4,-9Z" fill="#6e6e72" transform="translate(1,1) scale(0.95)"/><rect x="-2" y="-6" width="5" height="15" fill="#d8d8dc"/><path d="M-2,-4h3M-2,-2h2M-2,0h3M-2,2h2M-2,4h3M-2,6h2" stroke="#444" stroke-width=".8"/><path d="M13.500,6.500V12H8Z" fill="#a2a2a6"/></svg><svg style="left:416px;top:78px" width="32" height="32" viewBox="-14.800 -14.800 29.600 29.600"><path d="M-11.500,-9.500L-5.300,-6L-11.500,-2.500Z" fill="#8e8e92"/><circle cx="3" cy="-8" r="2.300" fill="#5e5e62"/><path d="M2,-5L-1,1L-5,8M0,0L4,4L4,9M2,-5L-3,-3L-4,1M2,-4L6,-1L10,-2" fill="none" stroke="#5e5e62" stroke-width="2.200" stroke-linecap="round" stroke-linejoin="round"/></svg><svg style="left:416px;top:125px" width="32" height="32" viewBox="-14.800 -14.800 29.600 29.600"><path d="M-11.500,-9.500L-5.300,-6L-11.500,-2.500Z" fill="#8e8e92"/><g transform="translate(2.500,1) scale(.86)"><path d="M-4,-9L-9.500,-6.500L-12,-1.500L-8.500,0.500L-7,-1V9.500H7V-1L8.500,0.500L12,-1.500L9.500,-6.500L4,-9C3,-6.500-3,-6.500-4,-9Z" fill="#7f7f83" transform="translate(-1,1) scale(0.92)"/><path d="M-9,-4C-3,-5-4,3 0,4.500S4,6 6.500,7" fill="none" stroke="#e8e8ea" stroke-width="1.600"/><path d="M4,-1L10.5,-8" stroke="#e8e8ea" stroke-width="2.600" stroke-linecap="round"/><circle cx="-9" cy="-4" r="1.300" fill="#e8e8ea"/><circle cx="6.500" cy="7" r="1.300" fill="#e8e8ea"/></g></svg><svg style="left:416px;top:157px" width="32" height="32" viewBox="-14.800 -14.800 29.600 29.600"><path d="M-4,-9L-9.500,-6.500L-12,-1.500L-8.500,0.500L-7,-1V9.500H7V-1L8.500,0.500L12,-1.500L9.500,-6.500L4,-9C3,-6.500-3,-6.500-4,-9Z" fill="#7f7f83" transform="translate(-1,1) scale(0.92)"/><path d="M-9,-4C-3,-5-4,3 0,4.500S4,6 6.500,7" fill="none" stroke="#e8e8ea" stroke-width="1.600"/><path d="M4,-1L10.5,-8" stroke="#e8e8ea" stroke-width="2.600" stroke-linecap="round"/><circle cx="-9" cy="-4" r="1.300" fill="#e8e8ea"/><circle cx="6.500" cy="7" r="1.300" fill="#e8e8ea"/></svg><svg style="left:416px;top:189px" width="32" height="32" viewBox="-14.800 -14.800 29.600 29.600"><path d="M-4,-9L-9.500,-6.500L-12,-1.500L-8.500,0.500L-7,-1V9.500H7V-1L8.500,0.500L12,-1.500L9.500,-6.500L4,-9C3,-6.500-3,-6.500-4,-9Z" fill="#7f7f83" transform="translate(-1,1) scale(0.92)"/><path d="M-9,-4C-3,-5-4,3 0,4.500S4,6 6.500,7" fill="none" stroke="#e8e8ea" stroke-width="1.600"/><path d="M4,-1L10.5,-8" stroke="#e8e8ea" stroke-width="2.600" stroke-linecap="round"/><circle cx="-9" cy="-4" r="1.300" fill="#e8e8ea"/><circle cx="6.500" cy="7" r="1.300" fill="#e8e8ea"/></svg><svg style="left:416px;top:237px" width="32" height="32" viewBox="-14.800 -14.800 29.600 29.600"><path d="M-11.500,-9.500L-5.300,-6L-11.500,-2.500Z" fill="#8e8e92"/><g transform="translate(2.500,1) scale(.86)"><path d="M-4,-9L-9.500,-6.500L-12,-1.500L-8.500,0.500L-7,-1V9.500H7V-1L8.500,0.500L12,-1.500L9.500,-6.500L4,-9C3,-6.500-3,-6.500-4,-9Z" fill="#7f7f83" transform="translate(-1,1) scale(0.92)"/><path d="M-9,-4C-3,-5-4,3 0,4.500S4,6 6.500,7" fill="none" stroke="#e8e8ea" stroke-width="1.600"/><path d="M4,-1L10.5,-8" stroke="#e8e8ea" stroke-width="2.600" stroke-linecap="round"/><circle cx="-9" cy="-4" r="1.300" fill="#e8e8ea"/><circle cx="6.500" cy="7" r="1.300" fill="#e8e8ea"/></g></svg><svg style="left:416px;top:269px" width="32" height="32" viewBox="-14.800 -14.800 29.600 29.600"><path d="M-4,-9L-9.500,-6.500L-12,-1.500L-8.500,0.500L-7,-1V9.500H7V-1L8.500,0.500L12,-1.500L9.500,-6.500L4,-9C3,-6.500-3,-6.500-4,-9Z" fill="#7f7f83" transform="translate(-1,1) scale(0.92)"/><path d="M-9,-4C-3,-5-4,3 0,4.500S4,6 6.500,7" fill="none" stroke="#e8e8ea" stroke-width="1.600"/><path d="M4,-1L10.5,-8" stroke="#e8e8ea" stroke-width="2.600" stroke-linecap="round"/><circle cx="-9" cy="-4" r="1.300" fill="#e8e8ea"/><circle cx="6.500" cy="7" r="1.300" fill="#e8e8ea"/><path d="M13.500,6.500V12H8Z" fill="#a2a2a6"/></svg><svg style="left:416px;top:317px" width="32" height="32" viewBox="-14.800 -14.800 29.600 29.600"><path d="M-11.500,-9.500L-5.300,-6L-11.500,-2.500Z" fill="#8e8e92"/><rect x="-6.0" y="0.0" width="2.5" height="2.5" fill="#1a1a1a"/><rect x="-6.0" y="2.5" width="2.5" height="2.5" fill="#e8e8e8"/><rect x="-6.0" y="5.0" width="2.5" height="2.5" fill="#1a1a1a"/><rect x="-6.0" y="7.5" width="2.5" height="2.5" fill="#e8e8e8"/><rect x="-3.5" y="0.0" width="2.5" height="2.5" fill="#e8e8e8"/><rect x="-3.5" y="2.5" width="2.5" height="2.5" fill="#1a1a1a"/><rect x="-3.5" y="5.0" width="2.5" height="2.5" fill="#e8e8e8"/><rect x="-3.5" y="7.5" width="2.5" height="2.5" fill="#1a1a1a"/><rect x="-1.0" y="0.0" width="2.5" height="2.5" fill="#1a1a1a"/><rect x="-1.0" y="2.5" width="2.5" height="2.5" fill="#e8e8e8"/><rect x="-1.0" y="5.0" width="2.5" height="2.5" fill="#1a1a1a"/><rect x="-1.0" y="7.5" width="2.5" height="2.5" fill="#e8e8e8"/><rect x="1.5" y="0.0" width="2.5" height="2.5" fill="#e8e8e8"/><rect x="1.5" y="2.5" width="2.5" height="2.5" fill="#1a1a1a"/><rect x="1.5" y="5.0" width="2.5" height="2.5" fill="#e8e8e8"/><rect x="1.5" y="7.5" width="2.5" height="2.5" fill="#1a1a1a"/><defs><linearGradient id="gTr28" x1="0" y1="0" x2="1" y2="0"><stop offset="0" stop-color="#8a8a8e"/><stop offset=".6" stop-color="#f0f0f2"/><stop offset="1" stop-color="#9a9a9e"/></linearGradient></defs><path d="M0,-6L9,-9C12,-9,12,-3,11,4L2,8C0,4,-1,-2,0,-6Z" fill="url(#gTr28)"/></svg><svg style="left:416px;top:349px" width="32" height="32" viewBox="-14.800 -14.800 29.600 29.600"><path d="M-11.500,-9.500L-5.300,-6L-11.500,-2.500Z" fill="#8e8e92"/><path d="M-4,-9L-9.500,-6.500L-12,-1.500L-8.500,0.500L-7,-1V9.500H7V-1L8.500,0.500L12,-1.500L9.500,-6.500L4,-9C3,-6.500-3,-6.500-4,-9Z" fill="#77777b" transform="translate(2.5,1) scale(0.86)"/><rect x="-1.5" y="0.0" width="1.6" height="1.6" fill="#f2f2f2"/><rect x="-1.5" y="1.6" width="1.6" height="1.6" fill="#1a1a1a"/><rect x="-1.5" y="3.2" width="1.6" height="1.6" fill="#f2f2f2"/><rect x="-1.5" y="4.800000000000001" width="1.6" height="1.6" fill="#1a1a1a"/><rect x="-1.5" y="6.4" width="1.6" height="1.6" fill="#f2f2f2"/><rect x="0.10000000000000009" y="0.0" width="1.6" height="1.6" fill="#1a1a1a"/><rect x="0.10000000000000009" y="1.6" width="1.6" height="1.6" fill="#f2f2f2"/><rect x="0.10000000000000009" y="3.2" width="1.6" height="1.6" fill="#1a1a1a"/><rect x="0.10000000000000009" y="4.800000000000001" width="1.6" height="1.6" fill="#f2f2f2"/><rect x="0.10000000000000009" y="6.4" width="1.6" height="1.6" fill="#1a1a1a"/><rect x="1.7000000000000002" y="0.0" width="1.6" height="1.6" fill="#f2f2f2"/><rect x="1.7000000000000002" y="1.6" width="1.6" height="1.6" fill="#1a1a1a"/><rect x="1.7000000000000002" y="3.2" width="1.6" height="1.6" fill="#f2f2f2"/><rect x="1.7000000000000002" y="4.800000000000001" width="1.6" height="1.6" fill="#1a1a1a"/><rect x="1.7000000000000002" y="6.4" width="1.6" height="1.6" fill="#f2f2f2"/><rect x="3.3000000000000007" y="0.0" width="1.6" height="1.6" fill="#1a1a1a"/><rect x="3.3000000000000007" y="1.6" width="1.6" height="1.6" fill="#f2f2f2"/><rect x="3.3000000000000007" y="3.2" width="1.6" height="1.6" fill="#1a1a1a"/><rect x="3.3000000000000007" y="4.800000000000001" width="1.6" height="1.6" fill="#f2f2f2"/><rect x="3.3000000000000007" y="6.4" width="1.6" height="1.6" fill="#1a1a1a"/><rect x="4.9" y="0.0" width="1.6" height="1.6" fill="#f2f2f2"/><rect x="4.9" y="1.6" width="1.6" height="1.6" fill="#1a1a1a"/><rect x="4.9" y="3.2" width="1.6" height="1.6" fill="#f2f2f2"/><rect x="4.9" y="4.800000000000001" width="1.6" height="1.6" fill="#1a1a1a"/><rect x="4.9" y="6.4" width="1.6" height="1.6" fill="#f2f2f2"/></svg><svg style="left:416px;top:381px" width="32" height="32" viewBox="-14.800 -14.800 29.600 29.600"><path d="M-4,-9L-9.500,-6.500L-12,-1.500L-8.500,0.500L-7,-1V9.500H7V-1L8.500,0.500L12,-1.500L9.500,-6.500L4,-9C3,-6.500-3,-6.500-4,-9Z" fill="#77777b" transform="translate(0,0) scale(1.05)"/><rect x="-4.5" y="-1.5" width="1.9" height="1.9" fill="#f2f2f2"/><rect x="-4.5" y="0.3999999999999999" width="1.9" height="1.9" fill="#1a1a1a"/><rect x="-4.5" y="2.3" width="1.9" height="1.9" fill="#f2f2f2"/><rect x="-4.5" y="4.199999999999999" width="1.9" height="1.9" fill="#1a1a1a"/><rect x="-4.5" y="6.1" width="1.9" height="1.9" fill="#f2f2f2"/><rect x="-2.6" y="-1.5" width="1.9" height="1.9" fill="#1a1a1a"/><rect x="-2.6" y="0.3999999999999999" width="1.9" height="1.9" fill="#f2f2f2"/><rect x="-2.6" y="2.3" width="1.9" height="1.9" fill="#1a1a1a"/><rect x="-2.6" y="4.199999999999999" width="1.9" height="1.9" fill="#f2f2f2"/><rect x="-2.6" y="6.1" width="1.9" height="1.9" fill="#1a1a1a"/><rect x="-0.7000000000000002" y="-1.5" width="1.9" height="1.9" fill="#f2f2f2"/><rect x="-0.7000000000000002" y="0.3999999999999999" width="1.9" height="1.9" fill="#1a1a1a"/><rect x="-0.7000000000000002" y="2.3" width="1.9" height="1.9" fill="#f2f2f2"/><rect x="-0.7000000000000002" y="4.199999999999999" width="1.9" height="1.9" fill="#1a1a1a"/><rect x="-0.7000000000000002" y="6.1" width="1.9" height="1.9" fill="#f2f2f2"/><rect x="1.1999999999999993" y="-1.5" width="1.9" height="1.9" fill="#1a1a1a"/><rect x="1.1999999999999993" y="0.3999999999999999" width="1.9" height="1.9" fill="#f2f2f2"/><rect x="1.1999999999999993" y="2.3" width="1.9" height="1.9" fill="#1a1a1a"/><rect x="1.1999999999999993" y="4.199999999999999" width="1.9" height="1.9" fill="#f2f2f2"/><rect x="1.1999999999999993" y="6.1" width="1.9" height="1.9" fill="#1a1a1a"/><rect x="3.0999999999999996" y="-1.5" width="1.9" height="1.9" fill="#f2f2f2"/><rect x="3.0999999999999996" y="0.3999999999999999" width="1.9" height="1.9" fill="#1a1a1a"/><rect x="3.0999999999999996" y="2.3" width="1.9" height="1.9" fill="#f2f2f2"/><rect x="3.0999999999999996" y="4.199999999999999" width="1.9" height="1.9" fill="#1a1a1a"/><rect x="3.0999999999999996" y="6.1" width="1.9" height="1.9" fill="#f2f2f2"/></svg><svg style="left:416px;top:430px" width="32" height="32" viewBox="-14.800 -14.800 29.600 29.600"><path d="M-11.500,-9.500L-5.300,-6L-11.500,-2.500Z" fill="#8e8e92"/><circle cx="2" cy="2" r="7" fill="#88888c"/><circle cx="-0.1" cy="-0.1" r="1.1" fill="#3a3a3d"/><circle cx="4.1" cy="-0.1" r="1.1" fill="#3a3a3d"/><circle cx="-0.1" cy="4.1" r="1.1" fill="#3a3a3d"/><circle cx="4.1" cy="4.1" r="1.1" fill="#3a3a3d"/><circle cx="-8" cy="2" r="1.600" fill="none" stroke="#7f7f83" stroke-width="1"/><path d="M-6,2h2M9,2h3" stroke="#7f7f83" stroke-width="1.200"/></svg><svg style="left:416px;top:462px" width="32" height="32" viewBox="-14.800 -14.800 29.600 29.600"><circle cx="-1" cy="-1" r="9.5" fill="#88888c"/><circle cx="-3.9" cy="-3.9" r="1.4" fill="#3a3a3d"/><circle cx="1.9" cy="-3.9" r="1.4" fill="#3a3a3d"/><circle cx="-3.9" cy="1.9" r="1.4" fill="#3a3a3d"/><circle cx="1.9" cy="1.9" r="1.4" fill="#3a3a3d"/><path d="M13.500,6.500V12H8Z" fill="#a2a2a6"/></svg><svg style="left:416px;top:494px" width="32" height="32" viewBox="-14.800 -14.800 29.600 29.600"><rect x="-11" y="-4" width="5" height="4.500" fill="#7f7f83"/><path d="M-10,-4v-1.500a1.500,1.500 0 0 1 3,0V-4" fill="none" stroke="#7f7f83" stroke-width="1"/><rect x="2" y="-10" width="8" height="20" rx="4" fill="none" stroke="#b9b9bd" stroke-width="1.500"/><circle cx="3" cy="0" r="6.5" fill="#88888c"/><circle cx="1.1" cy="-1.9" r="1.0" fill="#3a3a3d"/><circle cx="5.0" cy="-1.9" r="1.0" fill="#3a3a3d"/><circle cx="1.1" cy="1.9" r="1.0" fill="#3a3a3d"/><circle cx="5.0" cy="1.9" r="1.0" fill="#3a3a3d"/></svg><svg style="left:416px;top:542px" width="32" height="32" viewBox="-14.800 -14.800 29.600 29.600"><path d="M-11.500,-9.500L-5.300,-6L-11.500,-2.500Z" fill="#8e8e92"/><g transform="translate(2,1) scale(.85)"><rect x="-9" y="-6" width="18" height="16" fill="#6a6a6e"/><path d="M-3.5,-10h7v11c0,2-1,3-3.500,3s-3.500,-1-3.500,-3z" fill="#dcdce0"/><rect x="-1.5" y="-6" width="3" height="7" rx="1.500" fill="#555"/><path d="M0,4v6" stroke="#dcdce0" stroke-width="2" stroke-dasharray="1.500 1"/></g></svg><svg style="left:416px;top:574px" width="32" height="32" viewBox="-14.800 -14.800 29.600 29.600"><g transform="translate(0,-1)"><rect x="-9" y="-6" width="18" height="16" fill="#6a6a6e"/><path d="M-3.5,-10h7v11c0,2-1,3-3.500,3s-3.500,-1-3.500,-3z" fill="#dcdce0"/><rect x="-1.5" y="-6" width="3" height="7" rx="1.500" fill="#555"/><path d="M0,4v6" stroke="#dcdce0" stroke-width="2" stroke-dasharray="1.500 1"/></g></svg><svg style="left:416px;top:622px" width="32" height="32" viewBox="-14.800 -14.800 29.600 29.600"><path d="M-11.500,-9.500L-5.300,-6L-11.500,-2.500Z" fill="#8e8e92"/><g transform="translate(3,1) scale(.9)"><rect x="-8" y="-6" width="13" height="14" fill="#6f6f73"/><rect x="4" y="-9" width="5" height="18" rx="2.500" fill="#d2d2d6"/></g></svg><svg style="left:416px;top:653px" width="32" height="32" viewBox="-14.800 -14.800 29.600 29.600"><rect x="-10" y="-7" width="17" height="16" fill="#707074"/><rect x="6" y="-10" width="5" height="19" rx="2.500" fill="#dcdce0"/></svg><svg style="left:416px;top:702px" width="32" height="32" viewBox="-14.800 -14.800 29.600 29.600"><path d="M-11.500,-9.500L-5.300,-6L-11.500,-2.500Z" fill="#8e8e92"/><g transform="translate(3,1) scale(.9)"><rect x="-8" y="-6" width="13" height="14" fill="#6f6f73"/><rect x="4.500" y="-8" width="4.500" height="17" fill="#dcdce0"/></g></svg><svg style="left:416px;top:734px" width="32" height="32" viewBox="-14.800 -14.800 29.600 29.600"><rect x="-10" y="-8" width="17" height="16" fill="#707074"/><rect x="7" y="-9" width="4.500" height="18" fill="#dcdce0"/></svg><svg style="left:416px;top:782px" width="32" height="32" viewBox="-14.800 -14.800 29.600 29.600"><path d="M-4,-10V1H4V-10H2V-3H-2V-10Z" fill="#77777b"/><path d="M-4,1H4V7C4,10,-4,10,-4,7Z" fill="#a8a8ac"/><path d="M-11,0h4M5,0h6" stroke="#e8e8ea" stroke-width="1.400"/><path d="M-8,-2.500L-5,0L-8,2.500Z" fill="#e8e8ea"/><path d="M8,-2.500L5,0L8,2.500Z" fill="#e8e8ea"/></svg><div class="a" style="left:1493px;top:63px;width:76px;height:934px;background:#232326;"></div><div class="a" style="left:1531px;top:63px;width:1px;height:934px;background:#1e1e21;"></div><div class="a" style="left:1498px;top:71.5px;width:28px;height:1px;background:#101012;"></div><div class="a" style="left:1498px;top:407px;width:28px;height:1px;background:#101012;"></div><div class="a" style="left:1498px;top:455.5px;width:28px;height:1px;background:#101012;"></div><div class="a" style="left:1498px;top:535.5px;width:28px;height:1px;background:#101012;"></div><div class="a" style="left:1498px;top:615px;width:28px;height:1px;background:#101012;"></div><div class="a" style="left:1498px;top:663px;width:28px;height:1px;background:#101012;"></div><div class="a" style="left:1536px;top:71.5px;width:28px;height:1px;background:#101012;"></div><div class="a" style="left:1536px;top:215px;width:28px;height:1px;background:#101012;"></div><div class="a" style="left:1536px;top:263.5px;width:28px;height:1px;background:#101012;"></div><div class="a" style="left:1536px;top:311.5px;width:28px;height:1px;background:#101012;"></div><div class="a" style="left:1536px;top:423.5px;width:28px;height:1px;background:#101012;"></div><div class="a" style="left:1536px;top:503.5px;width:28px;height:1px;background:#101012;"></div><div class="a" style="left:1536px;top:583.5px;width:28px;height:1px;background:#101012;"></div><div class="a" style="left:1536px;top:631.5px;width:28px;height:1px;background:#101012;"></div><div class="a" style="left:1536px;top:679px;width:28px;height:1px;background:#101012;"></div><div class="a" style="left:1496px;top:80px;width:32px;height:28px;background:#101012;border:1px solid #060607;border-radius:5px"></div><svg style="left:1496px;top:78px" width="32" height="32" viewBox="-14.800 -14.800 29.600 29.600"><path d="M-11,-10L-5,-4.500L-8,-4L-10,-1.500Z" fill="#f4f4f4"/><defs><linearGradient id="gTri41" x1="0" y1="0" x2="0" y2="1"><stop offset="0" stop-color="#1e4f9c"/><stop offset="1" stop-color="#2f7fe0"/></linearGradient></defs><path d="M10,-6V8H-5Z" fill="url(#gTri41)" stroke="#3b8cf0" stroke-width=".8"/></svg><svg style="left:1496px;top:110px" width="32" height="32" viewBox="-14.800 -14.800 29.600 29.600"><path d="M-11.500,-9.500L-5.300,-6L-11.500,-2.500Z" fill="#8e8e92"/><path d="M-5,7L10,-6.500V7Z" fill="none" stroke="#b9b9bd" stroke-width="1.300"/><circle cx="-5" cy="7" r="1.700" fill="#e8e8ea"/><circle cx="10" cy="-6.5" r="1.700" fill="#e8e8ea"/><circle cx="10" cy="7" r="1.700" fill="#e8e8ea"/><path d="M13.500,6.500V12H8Z" fill="#a2a2a6"/></svg><svg style="left:1496px;top:142px" width="32" height="32" viewBox="-14.800 -14.800 29.600 29.600"><path d="M-8,-8H2V7H-8Z" fill="#7f7f83"/><path d="M2,-9L10,0L1,8" fill="none" stroke="#b9b9bd" stroke-width="2"/><circle cx="10" cy="0" r="1.900" fill="#e8e8ea"/><circle cx="1" cy="8" r="1.900" fill="#e8e8ea"/><path d="M13.500,6.500V12H8Z" fill="#a2a2a6"/></svg><svg style="left:1496px;top:174px" width="32" height="32" viewBox="-14.800 -14.800 29.600 29.600"><defs><linearGradient id="gRc44" x1="0" y1="0" x2="1" y2="1"><stop offset="0" stop-color="#77777b"/><stop offset="1" stop-color="#9a9a9e"/></linearGradient></defs><rect x="-9.500" y="-8.500" width="19" height="16" fill="url(#gRc44)"/><path d="M13.500,6.500V12H8Z" fill="#a2a2a6"/></svg><svg style="left:1496px;top:206px" width="32" height="32" viewBox="-14.800 -14.800 29.600 29.600"><rect x="-9.500" y="-8.500" width="19" height="16" fill="#7f7f83"/><path d="M-7,-5.500H2L7,-2V5H-7Z" fill="none" stroke="#d0d0d4" stroke-width="1.300"/><path d="M13.500,6.500V12H8Z" fill="#a2a2a6"/></svg><svg style="left:1496px;top:238px" width="32" height="32" viewBox="-14.800 -14.800 29.600 29.600"><path d="M-9,-9L-5,-8L-3,-5H3L5,-8L9,-9L10,-2L9,9H-9L-10,-2Z" fill="#8a8a8e"/><path d="M-3,-5L3,-2L-3,1L3,4L-3,7M3,-5L-3,-2L3,1L-3,4L3,7" fill="none" stroke="#e8e8ea" stroke-width="1.200"/></svg><svg style="left:1496px;top:270px" width="32" height="32" viewBox="-14.800 -14.800 29.600 29.600"><rect x="-9.500" y="-8.500" width="19" height="16" fill="#7f7f83"/><path d="M-7,-6H1L7,-1.500V5H-7Z" fill="none" stroke="#e8e8ea" stroke-width="1.300" stroke-dasharray="1.300 1.700"/><path d="M13.500,6.500V12H8Z" fill="#a2a2a6"/></svg><svg style="left:1496px;top:302px" width="32" height="32" viewBox="-14.800 -14.800 29.600 29.600"><rect x="-10" y="-7" width="15" height="16" fill="#7f7f83"/><path d="M0,-9.500H11V-4L5.500,0L0,-4Z" fill="#d6d6da"/><path d="M-8,1H-2V5L-5,7.500L-8,5Z" fill="#2a2a2d" stroke="#e8e8ea" stroke-width="1"/></svg><svg style="left:1496px;top:334px" width="32" height="32" viewBox="-14.800 -14.800 29.600 29.600"><path d="M-11.500,-9.500L-5.300,-6L-11.500,-2.500Z" fill="#8e8e92"/><path d="M-7,9L10,-8M3,1L10,9" stroke="#7f7f83" stroke-width="1.300"/><circle cx="2.500" cy="0" r="2" fill="#e8e8ea"/></svg><svg style="left:1496px;top:366px" width="32" height="32" viewBox="-14.800 -14.800 29.600 29.600"><path d="M-11.500,-9.500L-5.300,-6L-11.500,-2.500Z" fill="#8e8e92"/><path d="M-1,9V-2L3,-8L7,-6.500L10,-8.500L11,-3L9.500,0L11,3V9Z" fill="none" stroke="#d8d8dc" stroke-width="1.500" stroke-linejoin="round"/></svg><svg style="left:1496px;top:414px" width="32" height="32" viewBox="-14.800 -14.800 29.600 29.600"><defs><linearGradient id="gSm51" x1="0" y1="0" x2="1" y2="0"><stop offset="0" stop-color="#a0a0a4"/><stop offset="1" stop-color="#6a6a6e"/></linearGradient></defs><rect x="-9.500" y="-8" width="11" height="16" fill="url(#gSm51)"/><rect x="1.500" y="-5.500" width="8" height="11" fill="#77777b"/><path d="M1.500,-5.500V5.500" stroke="#e8e8ea" stroke-width="1.300"/><circle cx="1.500" cy="-5.500" r="1.700" fill="#e8e8ea"/><circle cx="1.500" cy="5.500" r="1.700" fill="#e8e8ea"/></svg><svg style="left:1496px;top:462px" width="32" height="32" viewBox="-14.800 -14.800 29.600 29.600"><path d="M-11.500,-9.500L-5.300,-6L-11.500,-2.500Z" fill="#8e8e92"/><path d="M0,-8V8" stroke="#b9b9bd" stroke-width="1.200"/><circle cx="0" cy="-8" r="1.500" fill="#e8e8ea"/><circle cx="0" cy="8" r="1.500" fill="#e8e8ea"/><rect x="4" y="-9" width="7" height="18" fill="#8a8a8e"/><path d="M4,-7h4M4,-5h3M4,-3h4M4,-1h3M4,1h4M4,3h3M4,5h4M4,7h3" stroke="#2a2a2d" stroke-width=".8"/></svg><svg style="left:1496px;top:494px" width="32" height="32" viewBox="-14.800 -14.800 29.600 29.600"><path d="M-9.500,-5.500H9.500" stroke="#b9b9bd" stroke-width="1.200"/><circle cx="-9.500" cy="-5.500" r="1.500" fill="#e8e8ea"/><circle cx="9.500" cy="-5.500" r="1.500" fill="#e8e8ea"/><rect x="-11" y="-1" width="22" height="7.500" fill="#8a8a8e"/><path d="M-9,-1v4M-7,-1v3M-5,-1v4M-3,-1v3M-1,-1v4M1,-1v3M3,-1v4M5,-1v3M7,-1v4M9,-1v3" stroke="#2a2a2d" stroke-width=".8"/></svg><svg style="left:1496px;top:542px" width="32" height="32" viewBox="-14.800 -14.800 29.600 29.600"><path d="M-11.500,-9.500L-5.300,-6L-11.500,-2.500Z" fill="#8e8e92"/><text x="2.500" y="10" text-anchor="middle" font-family="Liberation Serif,serif" font-size="25" fill="#c8c8cc">A</text></svg><svg style="left:1496px;top:574px" width="32" height="32" viewBox="-14.800 -14.800 29.600 29.600"><text x="-1" y="9" text-anchor="middle" font-family="Liberation Serif,serif" font-size="27" fill="#c8c8cc">A</text><path d="M13.500,6.500V12H8Z" fill="#a2a2a6"/></svg><svg style="left:1496px;top:622px" width="32" height="32" viewBox="-14.800 -14.800 29.600 29.600"><rect x="-11" y="-8" width="22" height="17" fill="none" stroke="#7f7f83" stroke-width="1.200"/><path d="M0,-8V9" stroke="#7f7f83" stroke-width="1.200"/><path d="M-5.500,-7V8M5.500,-7V8" stroke="#b9b9bd" stroke-width="1.300" stroke-dasharray="1.500 1.500"/><path d="M13.500,6.500V12H8Z" fill="#a2a2a6"/></svg><svg style="left:1496px;top:670px" width="32" height="32" viewBox="-14.800 -14.800 29.600 29.600"><path d="M-11.500,-9.500L-5.300,-6L-11.500,-2.500Z" fill="#8e8e92"/><path d="M-5,-4L-2,-6L2,-5L4,-8L8,-7V6H-5Z" fill="#7f7f83"/><path d="M3,-9L6,-5L4,-1L7,3" fill="none" stroke="#5e5e62" stroke-width="2"/><path d="M-1,8L10,-1" stroke="#e8e8ea" stroke-width="1.600"/><circle cx="-1" cy="8" r="1.500" fill="#e8e8ea"/><circle cx="10" cy="-1" r="1.500" fill="#e8e8ea"/><path d="M13.500,6.500V12H8Z" fill="#a2a2a6"/></svg><svg style="left:1496px;top:702px" width="32" height="32" viewBox="-14.800 -14.800 29.600 29.600"><circle cx="-5" cy="-9" r="2.500" fill="#5e5e62"/><path d="M-9,-5h8l1,15h-10z" fill="#5e5e62"/><path d="M-2,0L1,-2L5,-1L7,-3L10,-2V10H-2Z" fill="#d8d8dc"/><path d="M4,-2L9,-4L11,0V10H6Z" fill="#7f7f83"/></svg><svg style="left:1534px;top:78px" width="32" height="32" viewBox="-14.800 -14.800 29.600 29.600"><path d="M-11.500,-9.500L-5.300,-6L-11.500,-2.500Z" fill="#8e8e92"/><g transform="translate(2,1)" fill="#7f7f83"><path d="M-7,-6.500H2V-8.500H5V-6.500H8V6H2.500V-1H-2V1H-3.500V4H-5V1H-7Z"/><rect x="-8" y="7.500" width="16" height="1.300" fill="#b9b9bd"/></g></svg><svg style="left:1534px;top:110px" width="32" height="32" viewBox="-14.800 -14.800 29.600 29.600"><g transform="translate(2,-3)" fill="#6c6c70"><path d="M-7,-6.500H2V-8.500H5V-6.500H8V6H2.500V-1H-2V1H-3.500V4H-5V1H-7Z"/><rect x="-8" y="7.500" width="16" height="1.300" fill="#b9b9bd"/></g><circle cx="-9" cy="5" r="1.400" fill="#e8e8ea"/><circle cx="-9" cy="9.5" r="1.400" fill="#e8e8ea"/><circle cx="-2" cy="5" r="1.400" fill="#e8e8ea"/><circle cx="-2" cy="9.5" r="1.400" fill="#e8e8ea"/><circle cx="5" cy="5" r="1.400" fill="#e8e8ea"/><circle cx="5" cy="9.5" r="1.400" fill="#e8e8ea"/><path d="M-9,5H5M-9,9.500H5M-9,5V9.500M-2,5V9.500M5,5V9.500" stroke="#e8e8ea" stroke-width="1"/><path d="M13.500,6.500V12H8Z" fill="#a2a2a6"/></svg><svg style="left:1534px;top:142px" width="32" height="32" viewBox="-14.800 -14.800 29.600 29.600"><g transform="translate(2,-3)" fill="#6c6c70"><path d="M-7,-6.500H2V-8.500H5V-6.500H8V6H2.500V-1H-2V1H-3.500V4H-5V1H-7Z"/><rect x="-8" y="7.500" width="16" height="1.300" fill="#b9b9bd"/></g><path d="M-10,8C-6,4,-4,9,-1,8S4,5,7,7" fill="none" stroke="#b9b9bd" stroke-width="1.300"/><circle cx="-2" cy="8" r="1.600" fill="#e8e8ea"/><path d="M13.500,6.500V12H8Z" fill="#a2a2a6"/></svg><svg style="left:1534px;top:174px" width="32" height="32" viewBox="-14.800 -14.800 29.600 29.600"><circle cx="-9" cy="-8" r="2.200" fill="none" stroke="#b9b9bd" stroke-width="1.200"/><path d="M-7.500,-6.500l2,2" stroke="#b9b9bd" stroke-width="1.200"/><g transform="translate(2,1)" fill="#7f7f83"><path d="M-7,-6.500H2V-8.500H5V-6.500H8V6H2.500V-1H-2V1H-3.500V4H-5V1H-7Z"/><rect x="-8" y="7.500" width="16" height="1.300" fill="#b9b9bd"/></g></svg><svg style="left:1534px;top:222px" width="32" height="32" viewBox="-14.800 -14.800 29.600 29.600"><path d="M-9,4C-8,-3,-3,-8,4,-8H8C10,-8,10,-5,8,-5H3C1,-5,0,-3,0,-1H9C10,1,10.500,3,10.500,4Z" fill="#7f7f83"/><path d="M-10,6.500H11M-11,9H12" stroke="#58585c" stroke-width="1.300"/><circle cx="7" cy="-2.500" r="1" fill="#2a2a2d"/></svg><svg style="left:1534px;top:270px" width="32" height="32" viewBox="-14.800 -14.800 29.600 29.600"><path d="M-11.500,-9.500L-5.300,-6L-11.500,-2.500Z" fill="#8e8e92"/><path d="M-4,-9L-9.500,-6.500L-12,-1.500L-8.500,0.500L-7,-1V9.500H7V-1L8.500,0.500L12,-1.500L9.500,-6.500L4,-9C3,-6.500-3,-6.500-4,-9Z" fill="#8a8a8e" transform="translate(2.5,1.5) scale(0.86)"/></svg><svg style="left:1534px;top:318px" width="32" height="32" viewBox="-14.800 -14.800 29.600 29.600"><path d="M-11.500,-9.500L-5.300,-6L-11.500,-2.500Z" fill="#8e8e92"/><rect x="-6.0" y="0.0" width="2.5" height="2.5" fill="#1a1a1a"/><rect x="-6.0" y="2.5" width="2.5" height="2.5" fill="#e8e8e8"/><rect x="-6.0" y="5.0" width="2.5" height="2.5" fill="#1a1a1a"/><rect x="-6.0" y="7.5" width="2.5" height="2.5" fill="#e8e8e8"/><rect x="-3.5" y="0.0" width="2.5" height="2.5" fill="#e8e8e8"/><rect x="-3.5" y="2.5" width="2.5" height="2.5" fill="#1a1a1a"/><rect x="-3.5" y="5.0" width="2.5" height="2.5" fill="#e8e8e8"/><rect x="-3.5" y="7.5" width="2.5" height="2.5" fill="#1a1a1a"/><rect x="-1.0" y="0.0" width="2.5" height="2.5" fill="#1a1a1a"/><rect x="-1.0" y="2.5" width="2.5" height="2.5" fill="#e8e8e8"/><rect x="-1.0" y="5.0" width="2.5" height="2.5" fill="#1a1a1a"/><rect x="-1.0" y="7.5" width="2.5" height="2.5" fill="#e8e8e8"/><rect x="1.5" y="0.0" width="2.5" height="2.5" fill="#e8e8e8"/><rect x="1.5" y="2.5" width="2.5" height="2.5" fill="#1a1a1a"/><rect x="1.5" y="5.0" width="2.5" height="2.5" fill="#e8e8e8"/><rect x="1.5" y="7.5" width="2.5" height="2.5" fill="#1a1a1a"/><defs><linearGradient id="gTr65" x1="0" y1="0" x2="1" y2="0"><stop offset="0" stop-color="#8a8a8e"/><stop offset=".6" stop-color="#f0f0f2"/><stop offset="1" stop-color="#9a9a9e"/></linearGradient></defs><path d="M0,-6L9,-9C12,-9,12,-3,11,4L2,8C0,4,-1,-2,0,-6Z" fill="url(#gTr65)"/></svg><svg style="left:1534px;top:350px" width="32" height="32" viewBox="-14.800 -14.800 29.600 29.600"><path d="M-11.500,-9.500L-5.300,-6L-11.500,-2.500Z" fill="#8e8e92"/><path d="M-4,-9L-9.500,-6.500L-12,-1.500L-8.500,0.500L-7,-1V9.500H7V-1L8.500,0.500L12,-1.500L9.500,-6.500L4,-9C3,-6.500-3,-6.500-4,-9Z" fill="#77777b" transform="translate(2.5,1) scale(0.86)"/><rect x="-1.5" y="0.0" width="1.6" height="1.6" fill="#f2f2f2"/><rect x="-1.5" y="1.6" width="1.6" height="1.6" fill="#1a1a1a"/><rect x="-1.5" y="3.2" width="1.6" height="1.6" fill="#f2f2f2"/><rect x="-1.5" y="4.800000000000001" width="1.6" height="1.6" fill="#1a1a1a"/><rect x="-1.5" y="6.4" width="1.6" height="1.6" fill="#f2f2f2"/><rect x="0.10000000000000009" y="0.0" width="1.6" height="1.6" fill="#1a1a1a"/><rect x="0.10000000000000009" y="1.6" width="1.6" height="1.6" fill="#f2f2f2"/><rect x="0.10000000000000009" y="3.2" width="1.6" height="1.6" fill="#1a1a1a"/><rect x="0.10000000000000009" y="4.800000000000001" width="1.6" height="1.6" fill="#f2f2f2"/><rect x="0.10000000000000009" y="6.4" width="1.6" height="1.6" fill="#1a1a1a"/><rect x="1.7000000000000002" y="0.0" width="1.6" height="1.6" fill="#f2f2f2"/><rect x="1.7000000000000002" y="1.6" width="1.6" height="1.6" fill="#1a1a1a"/><rect x="1.7000000000000002" y="3.2" width="1.6" height="1.6" fill="#f2f2f2"/><rect x="1.7000000000000002" y="4.800000000000001" width="1.6" height="1.6" fill="#1a1a1a"/><rect x="1.7000000000000002" y="6.4" width="1.6" height="1.6" fill="#f2f2f2"/><rect x="3.3000000000000007" y="0.0" width="1.6" height="1.6" fill="#1a1a1a"/><rect x="3.3000000000000007" y="1.6" width="1.6" height="1.6" fill="#f2f2f2"/><rect x="3.3000000000000007" y="3.2" width="1.6" height="1.6" fill="#1a1a1a"/><rect x="3.3000000000000007" y="4.800000000000001" width="1.6" height="1.6" fill="#f2f2f2"/><rect x="3.3000000000000007" y="6.4" width="1.6" height="1.6" fill="#1a1a1a"/><rect x="4.9" y="0.0" width="1.6" height="1.6" fill="#f2f2f2"/><rect x="4.9" y="1.6" width="1.6" height="1.6" fill="#1a1a1a"/><rect x="4.9" y="3.2" width="1.6" height="1.6" fill="#f2f2f2"/><rect x="4.9" y="4.800000000000001" width="1.6" height="1.6" fill="#1a1a1a"/><rect x="4.9" y="6.4" width="1.6" height="1.6" fill="#f2f2f2"/></svg><svg style="left:1534px;top:382px" width="32" height="32" viewBox="-14.800 -14.800 29.600 29.600"><path d="M-4,-9L-9.500,-6.500L-12,-1.500L-8.500,0.500L-7,-1V9.500H7V-1L8.500,0.500L12,-1.500L9.500,-6.500L4,-9C3,-6.500-3,-6.500-4,-9Z" fill="#77777b" transform="translate(0,0) scale(1.05)"/><rect x="-4.5" y="-1.5" width="1.9" height="1.9" fill="#f2f2f2"/><rect x="-4.5" y="0.3999999999999999" width="1.9" height="1.9" fill="#1a1a1a"/><rect x="-4.5" y="2.3" width="1.9" height="1.9" fill="#f2f2f2"/><rect x="-4.5" y="4.199999999999999" width="1.9" height="1.9" fill="#1a1a1a"/><rect x="-4.5" y="6.1" width="1.9" height="1.9" fill="#f2f2f2"/><rect x="-2.6" y="-1.5" width="1.9" height="1.9" fill="#1a1a1a"/><rect x="-2.6" y="0.3999999999999999" width="1.9" height="1.9" fill="#f2f2f2"/><rect x="-2.6" y="2.3" width="1.9" height="1.9" fill="#1a1a1a"/><rect x="-2.6" y="4.199999999999999" width="1.9" height="1.9" fill="#f2f2f2"/><rect x="-2.6" y="6.1" width="1.9" height="1.9" fill="#1a1a1a"/><rect x="-0.7000000000000002" y="-1.5" width="1.9" height="1.9" fill="#f2f2f2"/><rect x="-0.7000000000000002" y="0.3999999999999999" width="1.9" height="1.9" fill="#1a1a1a"/><rect x="-0.7000000000000002" y="2.3" width="1.9" height="1.9" fill="#f2f2f2"/><rect x="-0.7000000000000002" y="4.199999999999999" width="1.9" height="1.9" fill="#1a1a1a"/><rect x="-0.7000000000000002" y="6.1" width="1.9" height="1.9" fill="#f2f2f2"/><rect x="1.1999999999999993" y="-1.5" width="1.9" height="1.9" fill="#1a1a1a"/><rect x="1.1999999999999993" y="0.3999999999999999" width="1.9" height="1.9" fill="#f2f2f2"/><rect x="1.1999999999999993" y="2.3" width="1.9" height="1.9" fill="#1a1a1a"/><rect x="1.1999999999999993" y="4.199999999999999" width="1.9" height="1.9" fill="#f2f2f2"/><rect x="1.1999999999999993" y="6.1" width="1.9" height="1.9" fill="#1a1a1a"/><rect x="3.0999999999999996" y="-1.5" width="1.9" height="1.9" fill="#f2f2f2"/><rect x="3.0999999999999996" y="0.3999999999999999" width="1.9" height="1.9" fill="#1a1a1a"/><rect x="3.0999999999999996" y="2.3" width="1.9" height="1.9" fill="#f2f2f2"/><rect x="3.0999999999999996" y="4.199999999999999" width="1.9" height="1.9" fill="#1a1a1a"/><rect x="3.0999999999999996" y="6.1" width="1.9" height="1.9" fill="#f2f2f2"/></svg><svg style="left:1534px;top:430px" width="32" height="32" viewBox="-14.800 -14.800 29.600 29.600"><path d="M-11.500,-9.500L-5.300,-6L-11.500,-2.500Z" fill="#8e8e92"/><path d="M-5,9L11,-6" stroke="#e8e8ea" stroke-width="1.700" stroke-dasharray="4 2.300"/></svg><svg style="left:1534px;top:462px" width="32" height="32" viewBox="-14.800 -14.800 29.600 29.600"><path d="M-10,-5.500H11" stroke="#e8e8ea" stroke-width="1.800" stroke-dasharray="4.500 2.500"/><path d="M-9,1.500H10" stroke="#b9b9bd" stroke-width="1.200"/><circle cx="-9" cy="1.500" r="1.500" fill="#e8e8ea"/><circle cx="10" cy="1.500" r="1.500" fill="#e8e8ea"/><path d="M13.500,6.500V12H8Z" fill="#a2a2a6"/></svg><svg style="left:1534px;top:510px" width="32" height="32" viewBox="-14.800 -14.800 29.600 29.600"><path d="M-11.500,-9.500L-5.300,-6L-11.500,-2.500Z" fill="#8e8e92"/><path d="M5,-8C-3,-8,-3,-5,3,-5S9,-2,1,-2S-3,1,4,1S9,4,1,4S-2,7,5,7" fill="none" stroke="#b9b9bd" stroke-width="1.500" transform="translate(-1,0)"/><path d="M9.500,-8V8" stroke="#b9b9bd" stroke-width="1.200"/><circle cx="9.500" cy="-8" r="1.500" fill="#e8e8ea"/><circle cx="9.500" cy="8" r="1.500" fill="#e8e8ea"/></svg><svg style="left:1534px;top:542px" width="32" height="32" viewBox="-14.800 -14.800 29.600 29.600"><path d="M-10,-2V-7C-10,-10,-6.500,-10,-6.500,-7V-3C-6.500,0,-3,0,-3,-3V-7C-3,-10,.5,-10,.5,-7V-3C.5,0,4,0,4,-3V-7C4,-10,7.500,-10,7.500,-7V-3C7.500,0,10.500,0,10.500,-3V-8" fill="none" stroke="#b9b9bd" stroke-width="1.400"/><path d="M-9,4H10" stroke="#b9b9bd" stroke-width="1.200"/><circle cx="-9" cy="4" r="1.500" fill="#e8e8ea"/><circle cx="10" cy="4" r="1.500" fill="#e8e8ea"/><path d="M13.500,6.500V12H8Z" fill="#a2a2a6"/></svg><svg style="left:1534px;top:590px" width="32" height="32" viewBox="-14.800 -14.800 29.600 29.600"><path d="M-10,-3L-6,-5L-3,-3L0,-5V9H-10Z" fill="#6a6a6e"/><path d="M2,-7L5,-9L8,-7L11,-8V5H2Z" fill="#8a8a8e"/><circle cx="1" cy="0" r="3" fill="none" stroke="#e8e8ea" stroke-width="1.200"/><path d="M-7,4.500L9,-4.500" stroke="#e8e8ea" stroke-width="1.200"/><path d="M1,-2V2" stroke="#e8e8ea" stroke-width="1"/></svg><svg style="left:1534px;top:638px" width="32" height="32" viewBox="-14.800 -14.800 29.600 29.600"><path d="M-3,-10L0,-7L3,-10L5,-8H-5Z" fill="#b9b9bd"/><rect x="-10" y="-7.5" width="9.300" height="3.600" rx="1.500" fill="#a4a4a8"/><rect x=".7" y="-7.5" width="9.300" height="3.600" rx="1.500" fill="#a4a4a8"/><rect x="-10" y="-3" width="9.300" height="3.600" rx="1.500" fill="#a4a4a8"/><rect x=".7" y="-3" width="9.300" height="3.600" rx="1.500" fill="#a4a4a8"/><rect x="-10" y="1.5" width="9.300" height="3.600" rx="1.500" fill="#a4a4a8"/><rect x=".7" y="1.5" width="9.300" height="3.600" rx="1.500" fill="#a4a4a8"/><rect x="-10" y="6" width="9.300" height="3.600" rx="1.500" fill="#a4a4a8"/><rect x=".7" y="6" width="9.300" height="3.600" rx="1.500" fill="#a4a4a8"/></svg>
<div class="a" style="left:1574px;top:43px;width:340px;height:348px;background:#232326;"></div><div class="a" style="left:1574px;top:43px;width:340px;height:20px;background:#1d1d20;"></div><svg style="left:1577px;top:48px;" width="14" height="10" viewBox="0 0 14 10"><path d="M1,5h8M6,2l3,3l-3,3" fill="none" stroke="#f0f0f0" stroke-width="1.500"/><path d="M12.500,0v10" stroke="#555" stroke-width="1"/></svg><div class="t k" style="left:1594px;width:300px;text-align:center;top:44.5px;color:#f0f0f0;font-size:11.7px">물체창</div><svg style="left:1899px;top:48px;" width="12" height="11" viewBox="0 0 12 11"><g fill="none" stroke="#d0d0d0" stroke-width="1.200"><rect x="3.500" y="1" width="8" height="6" rx="1"/><rect x=".7" y="3.500" width="8" height="6" rx="1" fill="#1d1d20"/></g></svg><div class="a" style="left:1574px;top:63px;width:340px;height:30px;background:#1d1d20;"></div><div class="a" style="left:1883px;top:63px;width:31px;height:30px;background:#252528;"></div><div class="a" style="left:1574px;top:92px;width:309px;height:1px;background:#343437;"></div><div class="a" style="left:1606px;top:91px;width:34px;height:2px;background:#5aa9f0;"></div><svg style="left:1576px;top:59px;" width="32" height="32" viewBox="-16 -16 32 32"><rect x="-7" y="-6.5" width="2.200" height="2.200" fill="#f2f2f2"/><rect x="-3.500" y="-6.5" width="10.500" height="2.200" fill="#f2f2f2"/><rect x="-7" y="-2.7" width="2.200" height="2.200" fill="#f2f2f2"/><rect x="-3.500" y="-2.7" width="10.500" height="2.200" fill="#f2f2f2"/><rect x="-7" y="1.1" width="2.200" height="2.200" fill="#f2f2f2"/><rect x="-3.500" y="1.1" width="10.500" height="2.200" fill="#f2f2f2"/><rect x="-7" y="4.9" width="2.200" height="2.200" fill="#f2f2f2"/><rect x="-3.500" y="4.9" width="10.500" height="2.200" fill="#f2f2f2"/></svg><svg style="left:1608px;top:59px;" width="32" height="32" viewBox="-16 -16 32 32"><path d="M-6,-3L-3,6H5L3,-1Z" fill="#3b6fb0"/><path d="M-4,-6.500C0,-8,5,-7,8,-7.500L6,4C2,4,-2,3.500,-6.500,5.500Z" fill="#6ab0f2"/></svg><svg style="left:1640px;top:59px;" width="32" height="32" viewBox="-16 -16 32 32"><rect x="-7.5" y="-7.5" width="3.750" height="3.750" fill="#f2f2f2"/><rect x="-7.5" y="-3.75" width="3.750" height="3.750" fill="#1d1d20"/><rect x="-7.5" y="0.0" width="3.750" height="3.750" fill="#f2f2f2"/><rect x="-7.5" y="3.75" width="3.750" height="3.750" fill="#1d1d20"/><rect x="-3.75" y="-7.5" width="3.750" height="3.750" fill="#1d1d20"/><rect x="-3.75" y="-3.75" width="3.750" height="3.750" fill="#f2f2f2"/><rect x="-3.75" y="0.0" width="3.750" height="3.750" fill="#1d1d20"/><rect x="-3.75" y="3.75" width="3.750" height="3.750" fill="#f2f2f2"/><rect x="0.0" y="-7.5" width="3.750" height="3.750" fill="#f2f2f2"/><rect x="0.0" y="-3.75" width="3.750" height="3.750" fill="#1d1d20"/><rect x="0.0" y="0.0" width="3.750" height="3.750" fill="#f2f2f2"/><rect x="0.0" y="3.75" width="3.750" height="3.750" fill="#1d1d20"/><rect x="3.75" y="-7.5" width="3.750" height="3.750" fill="#1d1d20"/><rect x="3.75" y="-3.75" width="3.750" height="3.750" fill="#f2f2f2"/><rect x="3.75" y="0.0" width="3.750" height="3.750" fill="#1d1d20"/><rect x="3.75" y="3.75" width="3.750" height="3.750" fill="#f2f2f2"/><rect x="-7.500" y="-7.500" width="15" height="15" fill="none" stroke="#f2f2f2" stroke-width="1"/></svg><svg style="left:1672px;top:59px;" width="32" height="32" viewBox="-16 -16 32 32"><circle r="8" fill="#f2f2f2"/><circle cx="-2.6" cy="-2.6" r="1.400" fill="#1d1d20"/><circle cx="-2.6" cy="2.6" r="1.400" fill="#1d1d20"/><circle cx="2.6" cy="-2.6" r="1.400" fill="#1d1d20"/><circle cx="2.6" cy="2.6" r="1.400" fill="#1d1d20"/></svg><svg style="left:1704px;top:59px;" width="32" height="32" viewBox="-16 -16 32 32"><circle cx="-6" cy="0" r="2.200" fill="#f2f2f2"/><path d="M-6,0H8" stroke="#f2f2f2" stroke-width="1.800"/></svg><svg style="left:1736px;top:59px;" width="32" height="32" viewBox="-16 -16 32 32"><path d="M-7,7L7,-7" stroke="#f2f2f2" stroke-width="1.900" stroke-dasharray="4.500 2.500"/></svg><svg style="left:1768px;top:59px;" width="32" height="32" viewBox="-16 -16 32 32"><path d="M-7,5C-9,-3,-5,-4,-4,1S-1,5,-1,-1S1,-6,2,0S5,3,4,-3S7,-6,8,-2" fill="none" stroke="#f2f2f2" stroke-width="1.600"/></svg><svg style="left:1800px;top:59px;" width="32" height="32" viewBox="-16 -16 32 32"><path d="M-8,-7L-2,-3.500V1.500L-8,4Z M8,-7L2,-3.500V1.500L8,4Z" fill="none" stroke="#f2f2f2" stroke-width="1.400"/><rect x="-2" y="-4" width="4" height="6" fill="#f2f2f2"/><path d="M-1,2L-5,8L-2,7Z M1,2L5,8L2,7Z" fill="#a8a8ac"/></svg><svg style="left:1832px;top:59px;" width="32" height="32" viewBox="-16 -16 32 32"><path d="M-4,-8h8v11c0,3,-1.500,5,-4,5s-4,-2,-4,-5z" fill="none" stroke="#f2f2f2" stroke-width="1.500"/><rect x="-1.500" y="-5" width="3" height="8" rx="1.500" fill="#f2f2f2"/><path d="M0,-8v3" stroke="#f2f2f2" stroke-width="1.500"/></svg><svg style="left:1862px;top:59px;clip-path:inset(0 11px 0 0);" width="32" height="32" viewBox="-16 -16 32 32"><path d="M-6,-3L-2,-7V-3H-6V8H1V-7H5V8" fill="#f2f2f2"/></svg><svg style="left:1888px;top:73px;" width="6" height="8" viewBox="0 0 6 8"><path d="M5,0.500V7.500L0.500,4Z" fill="#3c3c40"/></svg><svg style="left:1902px;top:73px;" width="6" height="8" viewBox="0 0 6 8"><path d="M0.500,0.500V7.500L5.500,4Z" fill="#f0f0f0"/></svg><svg style="left:1586px;top:115px;" width="14" height="14" viewBox="0 0 14 14"><defs><linearGradient id="trf" x1="0" y1="0" x2="0" y2="1"><stop offset="0" stop-color="#22dd9a"/><stop offset="1" stop-color="#2b8cf2"/></linearGradient></defs><g fill="none" stroke="url(#trf)" stroke-width="1.300"><path d="M7,1C5,1,4.500,3,5.500,5L8.500,10.500C9.500,12,12,11.500,12,9.500S10,7,8,7.500"/><path d="M7,1C9,1,9.500,3,8.500,5L5.500,10.500C4.500,12,2,11.500,2,9.500S4,7,6,7.500"/><path d="M3.500,11h7"/></g></svg><svg style="left:1817px;top:116px;" width="14" height="12" viewBox="0 0 14 12"><path d="M0.500,2.500c0,-.8,.5,-1.300,1.300,-1.300h3.200l1.200,1.400h6c.8,0,1.300,.5,1.300,1.300v6c0,.8,-.5,1.300,-1.300,1.300h-10.400c-.8,0,-1.300,-.5,-1.300,-1.300z" fill="#e4e4e4"/><path d="M9.500,1v5M7,3.500h5" stroke="#232326" stroke-width="2.600"/><path d="M9.500,1.500v4M7.500,3.500h4" stroke="#e4e4e4" stroke-width="1.200"/></svg><div class="a" style="left:1835px;top:110px;width:1px;height:26px;background:#2a2a2d;"></div><svg style="left:1842px;top:117px;" width="12" height="10" viewBox="0 0 12 10"><path d="M6,1C3,1,1.500,4,0.500,9L3,7.500L4,9C4.500,6,5,4,6,3C7,4,7.500,6,8,9L9,7.500L11.500,9C10.500,4,9,1,6,1Z" fill="#c8c8cc"/></svg><div class="t " style="left:1859px;top:114px;color:#ececee;font-size:11.3px">CLOFAB</div><div class="a" style="left:1584px;top:142px;width:330px;height:21px;background:#19191c;"></div><svg style="left:1596px;top:149px;" width="7" height="6" viewBox="0 0 7 6"><path d="M0,0.500h7l-3.500,5z" fill="#f0f0f0"/></svg><div class="t " style="left:1566px;width:300px;text-align:center;top:144px;color:#ececee;font-size:13px">Primary</div><svg style="left:1751px;top:146px;" width="14" height="13" viewBox="0 0 14 13"><path d="M1,12L1.800,8.500L9.500,1C10.500,0,13,2.500,12,3.500L4.500,11Z" fill="#f2f2f2"/></svg><svg style="left:1836px;top:146px;" width="13" height="13" viewBox="0 0 13 13"><path d="M1,4v8h8v-5" fill="none" stroke="#f0f0f0" stroke-width="1.300"/><path d="M3,9.500h4M5,5v4M3.500,7.500L5,9.200L6.500,7.500" stroke="#f0f0f0" stroke-width="1.100" fill="none"/><path d="M10,0v5M7.500,2.500h5" stroke="#f0f0f0" stroke-width="1.300"/></svg><svg style="left:1857px;top:147px;" width="12" height="12" viewBox="0 0 12 12"><path d="M6,0.500v11M0.500,6h11" stroke="#f4f4f4" stroke-width="1.700"/></svg><svg style="left:1876px;top:147px;" width="14" height="11" viewBox="0 0 14 11"><path d="M0.500,2c0,-.8,.5,-1.300,1.300,-1.300h3.200l1.200,1.400h6c.8,0,1.300,.5,1.300,1.300v6c0,.8,-.5,1.300,-1.300,1.300h-10.400c-.8,0,-1.300,-.5,-1.300,-1.300z" fill="#f2f2f2"/><path d="M0.500,3.800h13" stroke="#19191c" stroke-width=".8"/></svg><div class="a" style="left:1589px;top:164px;width:309px;height:41px;background:#2d3345;"></div><svg style="left:1588px;top:178px;" width="12" height="10" viewBox="0 0 12 10"><path d="M1,5L4.500,8.500L10.500,1.500" fill="none" stroke="#4da3f0" stroke-width="2"/></svg><div class="a" style="left:1607px;top:166px;width:37px;height:37px;background:#efedec;"></div><div class="t " style="left:1652px;top:176px;color:#5aa9f0;font-size:12.65px">V1_Cut_Sew_Knit_Fleece_Terry</div><svg style="left:1863px;top:178px;" width="12" height="12" viewBox="0 0 12 12"><rect x="0.500" y="0.500" width="11" height="11" rx="1" fill="#f0f0f0"/><path d="M6,2v5M3.500,5L6,7.500L8.500,5M3,9.500h6" stroke="#2d3345" stroke-width="1.300" fill="none"/></svg><svg style="left:1884px;top:183px;" width="10" height="3" viewBox="0 0 10 3"><circle cx="1.500" cy="1.500" r="1.100" fill="#f0f0f0"/><circle cx="5" cy="1.500" r="1.100" fill="#f0f0f0"/><circle cx="8.500" cy="1.500" r="1.100" fill="#f0f0f0"/></svg><div class="a" style="left:1574px;top:396px;width:340px;height:601px;background:#232326;"></div><div class="a" style="left:1574px;top:396px;width:340px;height:20px;background:#1d1d20;"></div><svg style="left:1577px;top:401px;" width="14" height="10" viewBox="0 0 14 10"><path d="M1,5h8M6,2l3,3l-3,3" fill="none" stroke="#f0f0f0" stroke-width="1.500"/><path d="M12.500,0v10" stroke="#555" stroke-width="1"/></svg><div class="t k" style="left:1594px;width:300px;text-align:center;top:397.5px;color:#f0f0f0;font-size:11.7px">속성창</div><svg style="left:1899px;top:401px;" width="12" height="11" viewBox="0 0 12 11"><g fill="none" stroke="#d0d0d0" stroke-width="1.200"><rect x="3.500" y="1" width="8" height="6" rx="1"/><rect x=".7" y="3.500" width="8" height="6" rx="1" fill="#1d1d20"/></g></svg><div class="a" style="left:1903px;top:416px;width:11px;height:581px;background:#0c0c0e;"></div><div class="a" style="left:1905.5px;top:488.5px;width:7px;height:220px;background:#4b4b4e;border-radius:3.500px"></div><div class="t " style="left:1620px;top:413px;color:#ececee;font-size:11.8px">2D 선분 길이</div><div class="t " style="right:38px;top:413px;color:#9c9ca0;font-size:12.5px">15225.5mm</div><div class="t " style="left:1632px;top:439px;color:#ececee;font-size:11.8px">+ 대칭 선분 길이</div><div class="t " style="right:38px;top:439px;color:#9c9ca0;font-size:12.5px">17648.0mm</div><div class="t " style="left:1620px;top:465px;color:#ececee;font-size:11.8px">3D 선분 길이</div><div class="t " style="right:38px;top:465px;color:#9c9ca0;font-size:12.5px">15089.3mm</div><div class="t " style="left:1632px;top:491px;color:#ececee;font-size:11.8px">+ 대칭 선분 길이</div><div class="t " style="right:38px;top:491px;color:#9c9ca0;font-size:12.5px">17538.1mm</div><div class="a" style="left:1620px;top:434px;width:273px;height:1px;background:#2c2c2f;"></div><div class="a" style="left:1620px;top:460px;width:273px;height:1px;background:#2c2c2f;"></div><div class="a" style="left:1620px;top:486px;width:273px;height:1px;background:#2c2c2f;"></div><div class="a" style="left:1620px;top:512px;width:273px;height:1px;background:#2c2c2f;"></div><div class="a" style="left:1620px;top:538px;width:273px;height:1px;background:#2c2c2f;"></div><div class="a" style="left:1620px;top:564px;width:273px;height:1px;background:#2c2c2f;"></div><div class="a" style="left:1620px;top:590px;width:273px;height:1px;background:#2c2c2f;"></div><div class="a" style="left:1620px;top:616px;width:273px;height:1px;background:#2c2c2f;"></div><div class="t k" style="left:1620px;top:517px;color:#ececee;font-size:11.9px">고무줄</div><div class="a" style="left:1787px;top:520.0px;width:12px;height:12px;background:#1c1c1f;border:1.300px solid #77777b;border-radius:3.500px"></div><div class="t " style="left:1805px;top:517px;color:#ececee">Off</div><div class="t k" style="left:1620px;top:543px;color:#ececee;font-size:11.9px">심지 테이프</div><div class="a" style="left:1787px;top:546.0px;width:12px;height:12px;background:#1c1c1f;border:1.300px solid #77777b;border-radius:3.500px"></div><div class="t " style="left:1805px;top:543px;color:#ececee">Off</div><div class="t k" style="left:1620px;top:569px;color:#ececee;font-size:11.9px">셔링 표현</div><div class="a" style="left:1787px;top:572.0px;width:12px;height:12px;background:#1c1c1f;border:1.300px solid #77777b;border-radius:3.500px"></div><div class="t " style="left:1805px;top:569px;color:#ececee">Off</div><svg style="left:1606px;top:600px;" width="8" height="7" viewBox="0 0 8 7"><path d="M0,0.500h8l-4,6z" fill="#f0f0f0"/></svg><div class="t k" style="left:1620px;top:595px;color:#ececee;font-size:11.9px">도식화선 보기</div><div class="a" style="left:1787px;top:597.5px;width:12px;height:12px;background:#4da3f0;border-radius:3px"></div><svg style="left:1788.5px;top:599.5px;" width="9" height="8" viewBox="0 0 9 8"><path d="M1,4L3.500,6.500L8,1.500" fill="none" stroke="#1a1a1d" stroke-width="1.600"/></svg><div class="t " style="left:1805px;top:595px;color:#ececee">On</div><div class="t " style="left:1639px;top:630px;color:#ececee;font-size:11.9px">Z축 거리 (mm)</div><div class="a" style="left:1799px;top:617.5px;width:81px;height:21px;background:#19191c;border-radius:4px"></div><div class="t " style="left:1807px;top:619.5px;color:#f0f0f0;font-size:12.5px">0</div><div class="a" style="left:1798px;top:648.5px;width:43px;height:3px;background:#9a9a9e;border-radius:1.500px"></div><div class="a" style="left:1841px;top:648.5px;width:41px;height:3px;background:#4a4a4e;border-radius:1.500px"></div><div class="a" style="left:1835.5px;top:645.5px;width:9px;height:9px;background:#f4f4f4;border-radius:50%"></div><div class="a" style="left:1639px;top:661px;width:254px;height:1px;background:#2c2c2f;"></div><svg style="left:1586px;top:668px;" width="8" height="7" viewBox="0 0 8 7"><path d="M0,0.500h8l-4,6z" fill="#f0f0f0"/></svg><div class="t k" style="left:1601px;top:662.5px;color:#5aa9f0;font-size:11.9px">원단</div><div class="a" style="left:1601px;top:682px;width:292px;height:1px;background:#2c2c2f;"></div><div class="t k" style="left:1620px;top:686px;color:#ececee;font-size:11.9px">원단</div><div class="a" style="left:1659px;top:682px;width:215px;height:26px;background:#19191c;border-radius:4px"></div><div class="a" style="left:1664px;top:685px;width:21px;height:20px;background:#efedec;"></div><div class="a" style="left:1690px;top:686px;width:161px;height:20px;overflow:hidden"><div class="t" style="left:0;top:1px;color:#ececee;font-size:12.65px">V1_Cut_Sew_Knit_Fleece_Terry</div></div><svg style="left:1860px;top:692px;" width="7" height="6" viewBox="0 0 7 6"><path d="M0,0.500h7l-3.500,5z" fill="#f0f0f0"/></svg><svg style="left:1878px;top:690px;" width="10" height="10" viewBox="0 0 10 10"><path d="M5,0.500L9.500,5L5,9.500L0.500,5Z" fill="none" stroke="#d8d8d8" stroke-width="1.100"/><path d="M5,2.500v5M2.500,5h5" stroke="#d8d8d8" stroke-width="1.100"/></svg><div class="a" style="left:1620px;top:709px;width:273px;height:1px;background:#2c2c2f;"></div><svg style="left:1606px;top:718px;" width="6" height="8" viewBox="0 0 6 8"><path d="M0.500,0.500l5.500,3.500l-5.500,3.500z" fill="#f0f0f0"/></svg><div class="t k" style="left:1620px;top:712.5px;color:#e8506e;font-size:11.9px">식서 방향</div><div class="a" style="left:1788px;top:711px;width:70px;height:22px;background:#33181f;border-radius:4px"></div><div class="t " style="left:1797px;top:712.5px;color:#e8506e">0.0</div><svg style="left:1859px;top:713px;" width="5" height="4" viewBox="0 0 5 4"><path d="M0,4h5l-2.500,-4z" fill="#f0f0f0"/></svg><svg style="left:1859px;top:724px;" width="5" height="4" viewBox="0 0 5 4"><path d="M0,0h5l-2.500,4z" fill="#f0f0f0"/></svg><svg style="left:1877px;top:715px;" width="13" height="13" viewBox="0 0 13 13"><path d="M11,4A5,5 0 1 0 11.500,8" fill="none" stroke="#f0f0f0" stroke-width="1.400"/><path d="M12,0.500v4h-4" fill="none" stroke="#f0f0f0" stroke-width="1.400"/></svg><div class="a" style="left:1620px;top:734px;width:273px;height:1px;background:#2c2c2f;"></div><div class="t " style="left:1620px;top:739px;color:#ececee">Pattern Matching</div><div class="a" style="left:1778px;top:735px;width:116px;height:26px;background:#19191c;border-radius:4px"></div><div class="t k" style="left:1784px;top:739px;color:#ececee">없음</div><svg style="left:1879px;top:745px;" width="7" height="6" viewBox="0 0 7 6"><path d="M0,0.500h7l-3.500,5z" fill="#f0f0f0"/></svg><div class="a" style="left:1620px;top:761px;width:273px;height:1px;background:#2c2c2f;"></div><div class="t " style="left:1620px;top:765.5px;color:#ececee">Pattern Matching Lock</div><div class="a" style="left:1788px;top:767.5px;width:12px;height:12px;background:#1c1c1f;border:1.300px solid #77777b;border-radius:3.500px"></div><div class="t " style="left:1806px;top:765.5px;color:#ececee">Off</div><div class="a" style="left:1620px;top:787px;width:273px;height:1px;background:#2c2c2f;"></div><svg style="left:1587px;top:794px;" width="6" height="8" viewBox="0 0 6 8"><path d="M0.500,0.500l5.500,3.500l-5.500,3.500z" fill="#f0f0f0"/></svg><div class="t k" style="left:1601px;top:788.5px;color:#5aa9f0;font-size:11.9px">본딩/스카이빙</div><div class="a" style="left:1601px;top:808px;width:292px;height:1px;background:#2c2c2f;"></div><div class="t k" style="left:1601px;top:812px;color:#5aa9f0;font-size:11.9px">형태 유지</div><div class="a" style="left:1775px;top:813.5px;width:12px;height:12px;background:#1c1c1f;border:1.300px solid #77777b;border-radius:3.500px"></div><div class="t " style="left:1793px;top:812px;color:#ececee">Off</div><svg style="left:1884px;top:815px;" width="10" height="10" viewBox="0 0 10 10"><path d="M5,0.500L9.500,5L5,9.500L0.500,5Z" fill="none" stroke="#d8d8d8" stroke-width="1.100"/><path d="M5,2.500v5M2.500,5h5" stroke="#d8d8d8" stroke-width="1.100"/></svg><div class="a" style="left:1601px;top:833px;width:292px;height:1px;background:#2c2c2f;"></div><svg style="left:1586px;top:840px;" width="8" height="7" viewBox="0 0 8 7"><path d="M0,0.500h8l-4,6z" fill="#f0f0f0"/></svg><div class="t k" style="left:1601px;top:835px;color:#5aa9f0;font-size:11.9px">시뮬레이션 속성</div><div class="a" style="left:1601px;top:853px;width:292px;height:1px;background:#2c2c2f;"></div><div class="t " style="left:1620px;top:857.5px;color:#ececee;font-size:11.9px">입자 간격 (mm)</div><div class="a" style="left:1807px;top:856.0px;width:83px;height:21px;background:#19191c;border-radius:4px"></div><div class="t " style="left:1815px;top:858.0px;color:#f0f0f0;font-size:12.5px">10.0</div><div class="a" style="left:1620px;top:879.5px;width:273px;height:1px;background:#2c2c2f;"></div><div class="t " style="left:1620px;top:883.5px;color:#ececee;font-size:11.9px">레이어</div><div class="a" style="left:1807px;top:882.0px;width:83px;height:21px;background:#19191c;border-radius:4px"></div><div class="t " style="left:1815px;top:884.0px;color:#f0f0f0;font-size:12.5px">0</div><div class="a" style="left:1620px;top:905.5px;width:273px;height:1px;background:#2c2c2f;"></div><div class="t " style="left:1620px;top:909.5px;color:#ececee;font-size:11.9px">수축률 - 위사 (%)</div><div class="a" style="left:1789px;top:908.0px;width:83px;height:21px;background:#19191c;border-radius:4px"></div><div class="t " style="left:1797px;top:910.0px;color:#f0f0f0;font-size:12.5px">100.00</div><svg style="left:1879px;top:913.5px;" width="10" height="10" viewBox="0 0 10 10"><path d="M5,0.500L9.500,5L5,9.500L0.500,5Z" fill="none" stroke="#d8d8d8" stroke-width="1.100"/><path d="M5,2.500v5M2.500,5h5" stroke="#d8d8d8" stroke-width="1.100"/></svg><div class="a" style="left:1620px;top:931.5px;width:273px;height:1px;background:#2c2c2f;"></div><div class="t " style="left:1620px;top:935.5px;color:#ececee;font-size:11.9px">수축률 - 경사 (%)</div><div class="a" style="left:1789px;top:934.0px;width:83px;height:21px;background:#19191c;border-radius:4px"></div><div class="t " style="left:1797px;top:936.0px;color:#f0f0f0;font-size:12.5px">100.00</div><svg style="left:1879px;top:939.5px;" width="10" height="10" viewBox="0 0 10 10"><path d="M5,0.500L9.500,5L5,9.500L0.500,5Z" fill="none" stroke="#d8d8d8" stroke-width="1.100"/><path d="M5,2.500v5M2.500,5h5" stroke="#d8d8d8" stroke-width="1.100"/></svg><div class="a" style="left:1620px;top:957.5px;width:273px;height:1px;background:#2c2c2f;"></div><div class="t " style="left:1620px;top:961.5px;color:#ececee;font-size:11.9px">개별 두께 - 충돌(mm)</div><div class="a" style="left:1807px;top:960.0px;width:83px;height:21px;background:#19191c;border-radius:4px"></div><div class="t " style="left:1815px;top:962.0px;color:#f0f0f0;font-size:12.5px">2.5</div><div class="a" style="left:1620px;top:983.5px;width:273px;height:1px;background:#2c2c2f;"></div><div class="a" style="left:1778px;top:985px;width:82px;height:12px;overflow:hidden;background:#19191c;border-radius:4px 4px 0 0"><div class="t" style="left:8px;top:0px;color:#ececee">0</div></div>
<div class="a" style="left:0px;top:997px;width:1919px;height:34px;background:#151517;"></div><div class="t " style="left:16px;top:1004.5px;color:#e4e4e6;font-size:10.9px">Version: 2025.2.164 (r57099)</div><svg style="left:1811px;top:1008px;" width="14" height="12" viewBox="0 0 14 12"><rect x="0.700" y="0.700" width="12.600" height="10.600" rx="1" fill="none" stroke="#e0e0e0" stroke-width="1.200"/><path d="M7,1v10" stroke="#e0e0e0" stroke-width="1.200"/></svg><div class="a" style="left:1835px;top:1009px;width:15px;height:10px;background:#e4e4e4;border-radius:2px"></div><div class="t " style="left:1692.5px;width:300px;text-align:center;top:1004.2px;color:#151517;font-size:8.5px;font-weight:bold;letter-spacing:-.3px">3D</div><div class="a" style="left:1859px;top:1009px;width:15px;height:10px;background:#e4e4e4;border-radius:2px"></div><div class="t " style="left:1716.5px;width:300px;text-align:center;top:1004.2px;color:#151517;font-size:8.5px;font-weight:bold;letter-spacing:-.3px">2D</div><div class="a" style="left:1879px;top:1004px;width:1px;height:20px;background:#232326;"></div><svg style="left:1887px;top:1008px;" width="13" height="13" viewBox="0 0 13 13"><path d="M11,4A5,5 0 1 0 11.500,8" fill="none" stroke="#f0f0f0" stroke-width="1.400"/><path d="M12,0.500v4h-4" fill="none" stroke="#f0f0f0" stroke-width="1.400"/></svg><div class="a" style="left:0px;top:1031px;width:1919px;height:48px;background:linear-gradient(90deg,#dfe8f6 0%,#d9e3f6 18%,#d6dcf4 36%,#dbe2f5 55%,#dfe5f5 75%,#e2e6f5 100%);"></div><div class="a" style="left:0px;top:1031px;width:1919px;height:1px;background:#c4cff0;"></div><div class="a" style="left:360px;top:1030px;width:1135px;height:2px;background:linear-gradient(90deg,#2c50c8,#3a6ad8 40%,#2c50c8);"></div><div class="a" style="left:749px;top:1045px;width:11px;height:11px;background:linear-gradient(135deg,#35b5f3,#0a74d4);border-radius:1px"></div><div class="a" style="left:761px;top:1045px;width:11px;height:11px;background:linear-gradient(135deg,#35b5f3,#0a74d4);border-radius:1px"></div><div class="a" style="left:749px;top:1057px;width:11px;height:11px;background:linear-gradient(135deg,#35b5f3,#0a74d4);border-radius:1px"></div><div class="a" style="left:761px;top:1057px;width:11px;height:11px;background:linear-gradient(135deg,#35b5f3,#0a74d4);border-radius:1px"></div><div class="a" style="left:786px;top:1041px;width:218px;height:30px;background:#f1f4fb;border-radius:15px;border:1px solid #d4dcf0"></div><svg style="left:796px;top:1048px;" width="16" height="16" viewBox="0 0 16 16"><circle cx="6.500" cy="6.500" r="5" fill="none" stroke="#222" stroke-width="1.600"/><path d="M10.300,10.300l4.200,4.200" stroke="#222" stroke-width="1.800" stroke-linecap="round"/></svg><div class="t k" style="left:822px;top:1046.5px;color:#4a4a4e;font-size:13.5px">검색</div><svg style="left:1016px;top:1043px;" width="26" height="26" viewBox="0 0 26 26"><defs><linearGradient id="ed1" x1="0" y1="0" x2="1" y2="1"><stop offset="0" stop-color="#35c1f1"/><stop offset=".5" stop-color="#1b8ad8"/><stop offset="1" stop-color="#0c4ea0"/></linearGradient><linearGradient id="ed2" x1="0" y1="0" x2="1" y2="0"><stop offset="0" stop-color="#2fd07c"/><stop offset="1" stop-color="#52e6a0"/></linearGradient></defs><circle cx="13" cy="13" r="12" fill="url(#ed1)"/><path d="M2,10C4,3,11,0,17,2C22,4,25,8,25,13C25,16,22,18,19,18C16,18,15,16,16,14C17,11,13,8,9,9C5,10,3,13,2,16C1,14,1,12,2,10Z" fill="url(#ed2)"/><path d="M9,9C6,11,6,16,8,19C10,22,14,24,18,23C14,23,11,20,11,17C11,14,13,13,15,13C14,10,11,9,9,9Z" fill="#0b3f8a" opacity=".75"/></svg><svg style="left:1060px;top:1043px;" width="26" height="26" viewBox="0 0 26 26"><circle cx="13" cy="13" r="12" fill="#e8453c"/><path d="M13,13L2.600,7A12,12 0 0 0 9,24.300Z" fill="#34a853"/><path d="M13,13L9,24.300A12,12 0 0 0 24.900,11Z" fill="#fbbc05"/><path d="M2.600,7A12,12 0 0 1 24.900,11H13Z" fill="#ea4335"/><path d="M13,13L24.900,11A12,12 0 0 1 9,24.300Z" fill="#fbbc05"/><circle cx="13" cy="13" r="5.600" fill="#fff"/><circle cx="13" cy="13" r="4.400" fill="#4285f4"/></svg><div class="a" style="left:1061px;top:1073px;width:24px;height:1px;background:#3a3a5a;"></div><svg style="left:1104px;top:1044px;" width="26" height="24" viewBox="0 0 26 24"><path d="M1,3c0,-1,.7,-2,2,-2h6l2,2.500h11c1,0,2,.8,2,2v2H1Z" fill="#e8a818"/><rect x="1" y="5" width="24" height="17" rx="1.500" fill="#ffd358"/><path d="M1,9h24v11.500c0,1,-.8,1.500,-1.500,1.500h-21c-.8,0,-1.500,-.7,-1.500,-1.500Z" fill="#fcc838"/><rect x="8" y="16" width="10" height="6" rx="1" fill="#2a7ad8"/><rect x="9.500" y="19" width="7" height="3" fill="#1a5cb0"/></svg><div class="a" style="left:1114px;top:1072px;width:6px;height:3px;background:#8a8a92;border-radius:1.500px"></div><div class="a" style="left:1142px;top:1037px;width:36px;height:39px;background:rgba(255,255,255,.55);border-radius:4px;border:1px solid rgba(255,255,255,.7)"></div><div class="a" style="left:1176px;top:1038px;width:3px;height:37px;background:rgba(255,255,255,.5);border-radius:2px"></div><svg style="left:1146px;top:1042px;" width="28" height="28" viewBox="0 0 28 28"><path d="M14,1L26,7.500V20.500L14,27L2,20.500V7.500Z" fill="#1c86ee"/><path d="M14,1L26,7.500L14,14L2,7.500Z" fill="#3aa0f6" opacity=".6"/><g transform="translate(14,14)"><path d="M5.300,-4.600A7,7 0 1 0 5.300,4.600" fill="none" stroke="#fff" stroke-width="3" stroke-dasharray="4.600 1.100"/></g></svg><div class="a" style="left:1153px;top:1072px;width:16px;height:3px;background:#1c6fe0;border-radius:1.500px"></div><svg style="left:1720px;top:1051px;" width="12" height="8" viewBox="0 0 12 8"><path d="M1,7L6,1.500L11,7" fill="none" stroke="#222" stroke-width="1.500"/></svg><div class="t " style="left:1608px;width:300px;text-align:center;top:1047px;color:#222;font-size:19px;font-family:Liberation Sans,sans-serif">A</div><svg style="left:1782px;top:1049px;" width="18" height="14" viewBox="0 0 18 14"><g fill="none" stroke="#222" stroke-width="1.300" stroke-linecap="round"><path d="M1,5C5,0.500,13,0.500,17,5"/><path d="M3.500,7.500C6.500,4,11.500,4,14.500,7.500"/><path d="M6,10C7.500,8,10.500,8,12,10"/></g><circle cx="9" cy="12.300" r="1.300" fill="#222"/></svg><svg style="left:1806px;top:1049px;" width="18" height="14" viewBox="0 0 18 14"><path d="M1,5h3l4,-3.500v11L4,9H1Z" fill="none" stroke="#222" stroke-width="1.200" stroke-linejoin="round"/><g fill="none" stroke="#222" stroke-width="1.200" stroke-linecap="round"><path d="M10.500,5C11.500,6,11.500,8,10.500,9"/><path d="M12.500,3.500C14.500,5.500,14.500,8.500,12.500,10.500"/><path d="M14.500,2C17.500,5,17.500,9,14.500,12"/></g></svg><div class="t " style="right:18px;top:1038px;color:#1c1c1c;font-size:12px">오전 11:36</div><div class="t " style="right:18px;top:1054px;color:#1c1c1c;font-size:12px">2026-01-16</div></body></html>
